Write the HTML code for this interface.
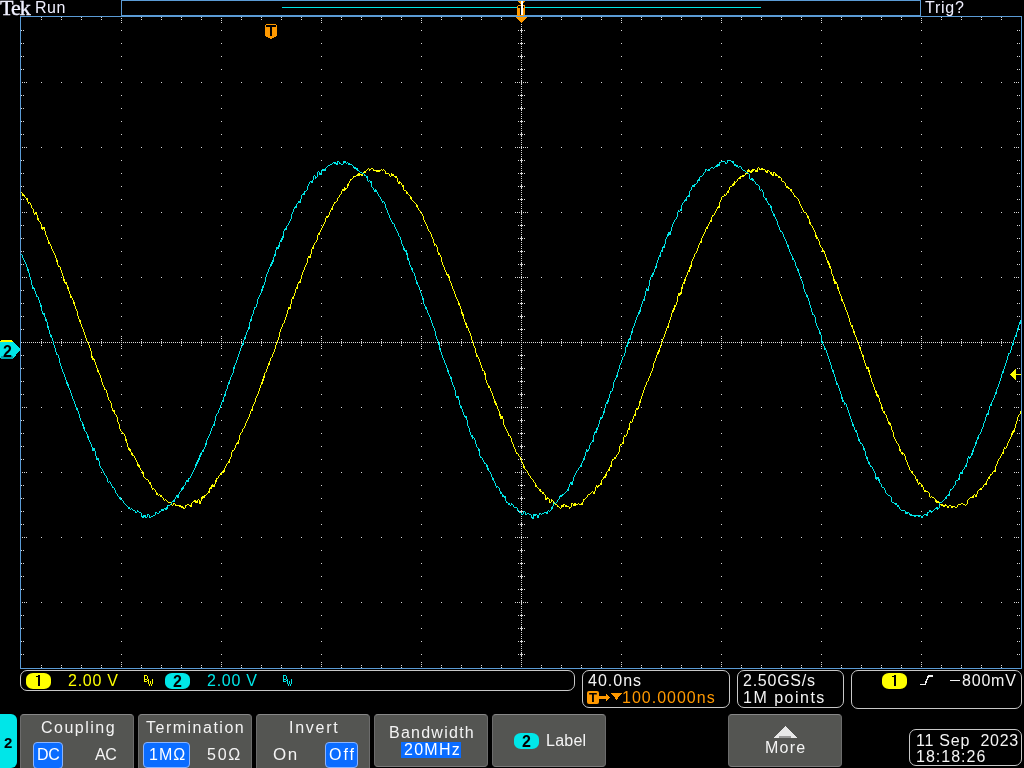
<!DOCTYPE html>
<html><head><meta charset="utf-8"><style>
html,body{margin:0;padding:0;background:#000;width:1024px;height:768px;overflow:hidden}
body{position:relative;font-family:"Liberation Sans",sans-serif;color:#eee}
.a{position:absolute;white-space:nowrap;line-height:1;will-change:transform}
</style></head><body>
<svg width="1024" height="768" viewBox="0 0 1024 768" shape-rendering="crispEdges" style="position:absolute;left:0;top:0">
<rect x="121.5" y="0.5" width="799" height="15" fill="none" stroke="#5b9bd5"/>
<rect x="282" y="7" width="479" height="1" fill="#00e6e8"/>
<rect x="20.5" y="16.5" width="1001" height="652" fill="none" stroke="#5b9bd5"/>
<path d="M121 30h1v1h-1zM121 43h1v1h-1zM121 56h1v1h-1zM121 69h1v1h-1zM121 95h1v1h-1zM121 108h1v1h-1zM121 121h1v1h-1zM121 134h1v1h-1zM121 160h1v1h-1zM121 173h1v1h-1zM121 186h1v1h-1zM121 199h1v1h-1zM121 225h1v1h-1zM121 238h1v1h-1zM121 251h1v1h-1zM121 264h1v1h-1zM121 290h1v1h-1zM121 303h1v1h-1zM121 316h1v1h-1zM121 329h1v1h-1zM121 355h1v1h-1zM121 368h1v1h-1zM121 381h1v1h-1zM121 394h1v1h-1zM121 420h1v1h-1zM121 433h1v1h-1zM121 446h1v1h-1zM121 459h1v1h-1zM121 485h1v1h-1zM121 498h1v1h-1zM121 511h1v1h-1zM121 524h1v1h-1zM121 550h1v1h-1zM121 563h1v1h-1zM121 576h1v1h-1zM121 589h1v1h-1zM121 615h1v1h-1zM121 628h1v1h-1zM121 641h1v1h-1zM121 654h1v1h-1zM221 30h1v1h-1zM221 43h1v1h-1zM221 56h1v1h-1zM221 69h1v1h-1zM221 95h1v1h-1zM221 108h1v1h-1zM221 121h1v1h-1zM221 134h1v1h-1zM221 160h1v1h-1zM221 173h1v1h-1zM221 186h1v1h-1zM221 199h1v1h-1zM221 225h1v1h-1zM221 238h1v1h-1zM221 251h1v1h-1zM221 264h1v1h-1zM221 290h1v1h-1zM221 303h1v1h-1zM221 316h1v1h-1zM221 329h1v1h-1zM221 355h1v1h-1zM221 368h1v1h-1zM221 381h1v1h-1zM221 394h1v1h-1zM221 420h1v1h-1zM221 433h1v1h-1zM221 446h1v1h-1zM221 459h1v1h-1zM221 485h1v1h-1zM221 498h1v1h-1zM221 511h1v1h-1zM221 524h1v1h-1zM221 550h1v1h-1zM221 563h1v1h-1zM221 576h1v1h-1zM221 589h1v1h-1zM221 615h1v1h-1zM221 628h1v1h-1zM221 641h1v1h-1zM221 654h1v1h-1zM321 30h1v1h-1zM321 43h1v1h-1zM321 56h1v1h-1zM321 69h1v1h-1zM321 95h1v1h-1zM321 108h1v1h-1zM321 121h1v1h-1zM321 134h1v1h-1zM321 160h1v1h-1zM321 173h1v1h-1zM321 186h1v1h-1zM321 199h1v1h-1zM321 225h1v1h-1zM321 238h1v1h-1zM321 251h1v1h-1zM321 264h1v1h-1zM321 290h1v1h-1zM321 303h1v1h-1zM321 316h1v1h-1zM321 329h1v1h-1zM321 355h1v1h-1zM321 368h1v1h-1zM321 381h1v1h-1zM321 394h1v1h-1zM321 420h1v1h-1zM321 433h1v1h-1zM321 446h1v1h-1zM321 459h1v1h-1zM321 485h1v1h-1zM321 498h1v1h-1zM321 511h1v1h-1zM321 524h1v1h-1zM321 550h1v1h-1zM321 563h1v1h-1zM321 576h1v1h-1zM321 589h1v1h-1zM321 615h1v1h-1zM321 628h1v1h-1zM321 641h1v1h-1zM321 654h1v1h-1zM421 30h1v1h-1zM421 43h1v1h-1zM421 56h1v1h-1zM421 69h1v1h-1zM421 95h1v1h-1zM421 108h1v1h-1zM421 121h1v1h-1zM421 134h1v1h-1zM421 160h1v1h-1zM421 173h1v1h-1zM421 186h1v1h-1zM421 199h1v1h-1zM421 225h1v1h-1zM421 238h1v1h-1zM421 251h1v1h-1zM421 264h1v1h-1zM421 290h1v1h-1zM421 303h1v1h-1zM421 316h1v1h-1zM421 329h1v1h-1zM421 355h1v1h-1zM421 368h1v1h-1zM421 381h1v1h-1zM421 394h1v1h-1zM421 420h1v1h-1zM421 433h1v1h-1zM421 446h1v1h-1zM421 459h1v1h-1zM421 485h1v1h-1zM421 498h1v1h-1zM421 511h1v1h-1zM421 524h1v1h-1zM421 550h1v1h-1zM421 563h1v1h-1zM421 576h1v1h-1zM421 589h1v1h-1zM421 615h1v1h-1zM421 628h1v1h-1zM421 641h1v1h-1zM421 654h1v1h-1zM621 30h1v1h-1zM621 43h1v1h-1zM621 56h1v1h-1zM621 69h1v1h-1zM621 95h1v1h-1zM621 108h1v1h-1zM621 121h1v1h-1zM621 134h1v1h-1zM621 160h1v1h-1zM621 173h1v1h-1zM621 186h1v1h-1zM621 199h1v1h-1zM621 225h1v1h-1zM621 238h1v1h-1zM621 251h1v1h-1zM621 264h1v1h-1zM621 290h1v1h-1zM621 303h1v1h-1zM621 316h1v1h-1zM621 329h1v1h-1zM621 355h1v1h-1zM621 368h1v1h-1zM621 381h1v1h-1zM621 394h1v1h-1zM621 420h1v1h-1zM621 433h1v1h-1zM621 446h1v1h-1zM621 459h1v1h-1zM621 485h1v1h-1zM621 498h1v1h-1zM621 511h1v1h-1zM621 524h1v1h-1zM621 550h1v1h-1zM621 563h1v1h-1zM621 576h1v1h-1zM621 589h1v1h-1zM621 615h1v1h-1zM621 628h1v1h-1zM621 641h1v1h-1zM621 654h1v1h-1zM721 30h1v1h-1zM721 43h1v1h-1zM721 56h1v1h-1zM721 69h1v1h-1zM721 95h1v1h-1zM721 108h1v1h-1zM721 121h1v1h-1zM721 134h1v1h-1zM721 160h1v1h-1zM721 173h1v1h-1zM721 186h1v1h-1zM721 199h1v1h-1zM721 225h1v1h-1zM721 238h1v1h-1zM721 251h1v1h-1zM721 264h1v1h-1zM721 290h1v1h-1zM721 303h1v1h-1zM721 316h1v1h-1zM721 329h1v1h-1zM721 355h1v1h-1zM721 368h1v1h-1zM721 381h1v1h-1zM721 394h1v1h-1zM721 420h1v1h-1zM721 433h1v1h-1zM721 446h1v1h-1zM721 459h1v1h-1zM721 485h1v1h-1zM721 498h1v1h-1zM721 511h1v1h-1zM721 524h1v1h-1zM721 550h1v1h-1zM721 563h1v1h-1zM721 576h1v1h-1zM721 589h1v1h-1zM721 615h1v1h-1zM721 628h1v1h-1zM721 641h1v1h-1zM721 654h1v1h-1zM821 30h1v1h-1zM821 43h1v1h-1zM821 56h1v1h-1zM821 69h1v1h-1zM821 95h1v1h-1zM821 108h1v1h-1zM821 121h1v1h-1zM821 134h1v1h-1zM821 160h1v1h-1zM821 173h1v1h-1zM821 186h1v1h-1zM821 199h1v1h-1zM821 225h1v1h-1zM821 238h1v1h-1zM821 251h1v1h-1zM821 264h1v1h-1zM821 290h1v1h-1zM821 303h1v1h-1zM821 316h1v1h-1zM821 329h1v1h-1zM821 355h1v1h-1zM821 368h1v1h-1zM821 381h1v1h-1zM821 394h1v1h-1zM821 420h1v1h-1zM821 433h1v1h-1zM821 446h1v1h-1zM821 459h1v1h-1zM821 485h1v1h-1zM821 498h1v1h-1zM821 511h1v1h-1zM821 524h1v1h-1zM821 550h1v1h-1zM821 563h1v1h-1zM821 576h1v1h-1zM821 589h1v1h-1zM821 615h1v1h-1zM821 628h1v1h-1zM821 641h1v1h-1zM821 654h1v1h-1zM921 30h1v1h-1zM921 43h1v1h-1zM921 56h1v1h-1zM921 69h1v1h-1zM921 95h1v1h-1zM921 108h1v1h-1zM921 121h1v1h-1zM921 134h1v1h-1zM921 160h1v1h-1zM921 173h1v1h-1zM921 186h1v1h-1zM921 199h1v1h-1zM921 225h1v1h-1zM921 238h1v1h-1zM921 251h1v1h-1zM921 264h1v1h-1zM921 290h1v1h-1zM921 303h1v1h-1zM921 316h1v1h-1zM921 329h1v1h-1zM921 355h1v1h-1zM921 368h1v1h-1zM921 381h1v1h-1zM921 394h1v1h-1zM921 420h1v1h-1zM921 433h1v1h-1zM921 446h1v1h-1zM921 459h1v1h-1zM921 485h1v1h-1zM921 498h1v1h-1zM921 511h1v1h-1zM921 524h1v1h-1zM921 550h1v1h-1zM921 563h1v1h-1zM921 576h1v1h-1zM921 589h1v1h-1zM921 615h1v1h-1zM921 628h1v1h-1zM921 641h1v1h-1zM921 654h1v1h-1zM41 82h1v1h-1zM61 82h1v1h-1zM81 82h1v1h-1zM101 82h1v1h-1zM121 82h1v1h-1zM141 82h1v1h-1zM161 82h1v1h-1zM181 82h1v1h-1zM201 82h1v1h-1zM221 82h1v1h-1zM241 82h1v1h-1zM261 82h1v1h-1zM281 82h1v1h-1zM301 82h1v1h-1zM321 82h1v1h-1zM341 82h1v1h-1zM361 82h1v1h-1zM381 82h1v1h-1zM401 82h1v1h-1zM421 82h1v1h-1zM441 82h1v1h-1zM461 82h1v1h-1zM481 82h1v1h-1zM501 82h1v1h-1zM521 82h1v1h-1zM541 82h1v1h-1zM561 82h1v1h-1zM581 82h1v1h-1zM601 82h1v1h-1zM621 82h1v1h-1zM641 82h1v1h-1zM661 82h1v1h-1zM681 82h1v1h-1zM701 82h1v1h-1zM721 82h1v1h-1zM741 82h1v1h-1zM761 82h1v1h-1zM781 82h1v1h-1zM801 82h1v1h-1zM821 82h1v1h-1zM841 82h1v1h-1zM861 82h1v1h-1zM881 82h1v1h-1zM901 82h1v1h-1zM921 82h1v1h-1zM941 82h1v1h-1zM961 82h1v1h-1zM981 82h1v1h-1zM1001 82h1v1h-1zM41 147h1v1h-1zM61 147h1v1h-1zM81 147h1v1h-1zM101 147h1v1h-1zM121 147h1v1h-1zM141 147h1v1h-1zM161 147h1v1h-1zM181 147h1v1h-1zM201 147h1v1h-1zM221 147h1v1h-1zM241 147h1v1h-1zM261 147h1v1h-1zM281 147h1v1h-1zM301 147h1v1h-1zM321 147h1v1h-1zM341 147h1v1h-1zM361 147h1v1h-1zM381 147h1v1h-1zM401 147h1v1h-1zM421 147h1v1h-1zM441 147h1v1h-1zM461 147h1v1h-1zM481 147h1v1h-1zM501 147h1v1h-1zM521 147h1v1h-1zM541 147h1v1h-1zM561 147h1v1h-1zM581 147h1v1h-1zM601 147h1v1h-1zM621 147h1v1h-1zM641 147h1v1h-1zM661 147h1v1h-1zM681 147h1v1h-1zM701 147h1v1h-1zM721 147h1v1h-1zM741 147h1v1h-1zM761 147h1v1h-1zM781 147h1v1h-1zM801 147h1v1h-1zM821 147h1v1h-1zM841 147h1v1h-1zM861 147h1v1h-1zM881 147h1v1h-1zM901 147h1v1h-1zM921 147h1v1h-1zM941 147h1v1h-1zM961 147h1v1h-1zM981 147h1v1h-1zM1001 147h1v1h-1zM41 212h1v1h-1zM61 212h1v1h-1zM81 212h1v1h-1zM101 212h1v1h-1zM121 212h1v1h-1zM141 212h1v1h-1zM161 212h1v1h-1zM181 212h1v1h-1zM201 212h1v1h-1zM221 212h1v1h-1zM241 212h1v1h-1zM261 212h1v1h-1zM281 212h1v1h-1zM301 212h1v1h-1zM321 212h1v1h-1zM341 212h1v1h-1zM361 212h1v1h-1zM381 212h1v1h-1zM401 212h1v1h-1zM421 212h1v1h-1zM441 212h1v1h-1zM461 212h1v1h-1zM481 212h1v1h-1zM501 212h1v1h-1zM521 212h1v1h-1zM541 212h1v1h-1zM561 212h1v1h-1zM581 212h1v1h-1zM601 212h1v1h-1zM621 212h1v1h-1zM641 212h1v1h-1zM661 212h1v1h-1zM681 212h1v1h-1zM701 212h1v1h-1zM721 212h1v1h-1zM741 212h1v1h-1zM761 212h1v1h-1zM781 212h1v1h-1zM801 212h1v1h-1zM821 212h1v1h-1zM841 212h1v1h-1zM861 212h1v1h-1zM881 212h1v1h-1zM901 212h1v1h-1zM921 212h1v1h-1zM941 212h1v1h-1zM961 212h1v1h-1zM981 212h1v1h-1zM1001 212h1v1h-1zM41 277h1v1h-1zM61 277h1v1h-1zM81 277h1v1h-1zM101 277h1v1h-1zM121 277h1v1h-1zM141 277h1v1h-1zM161 277h1v1h-1zM181 277h1v1h-1zM201 277h1v1h-1zM221 277h1v1h-1zM241 277h1v1h-1zM261 277h1v1h-1zM281 277h1v1h-1zM301 277h1v1h-1zM321 277h1v1h-1zM341 277h1v1h-1zM361 277h1v1h-1zM381 277h1v1h-1zM401 277h1v1h-1zM421 277h1v1h-1zM441 277h1v1h-1zM461 277h1v1h-1zM481 277h1v1h-1zM501 277h1v1h-1zM521 277h1v1h-1zM541 277h1v1h-1zM561 277h1v1h-1zM581 277h1v1h-1zM601 277h1v1h-1zM621 277h1v1h-1zM641 277h1v1h-1zM661 277h1v1h-1zM681 277h1v1h-1zM701 277h1v1h-1zM721 277h1v1h-1zM741 277h1v1h-1zM761 277h1v1h-1zM781 277h1v1h-1zM801 277h1v1h-1zM821 277h1v1h-1zM841 277h1v1h-1zM861 277h1v1h-1zM881 277h1v1h-1zM901 277h1v1h-1zM921 277h1v1h-1zM941 277h1v1h-1zM961 277h1v1h-1zM981 277h1v1h-1zM1001 277h1v1h-1zM41 407h1v1h-1zM61 407h1v1h-1zM81 407h1v1h-1zM101 407h1v1h-1zM121 407h1v1h-1zM141 407h1v1h-1zM161 407h1v1h-1zM181 407h1v1h-1zM201 407h1v1h-1zM221 407h1v1h-1zM241 407h1v1h-1zM261 407h1v1h-1zM281 407h1v1h-1zM301 407h1v1h-1zM321 407h1v1h-1zM341 407h1v1h-1zM361 407h1v1h-1zM381 407h1v1h-1zM401 407h1v1h-1zM421 407h1v1h-1zM441 407h1v1h-1zM461 407h1v1h-1zM481 407h1v1h-1zM501 407h1v1h-1zM521 407h1v1h-1zM541 407h1v1h-1zM561 407h1v1h-1zM581 407h1v1h-1zM601 407h1v1h-1zM621 407h1v1h-1zM641 407h1v1h-1zM661 407h1v1h-1zM681 407h1v1h-1zM701 407h1v1h-1zM721 407h1v1h-1zM741 407h1v1h-1zM761 407h1v1h-1zM781 407h1v1h-1zM801 407h1v1h-1zM821 407h1v1h-1zM841 407h1v1h-1zM861 407h1v1h-1zM881 407h1v1h-1zM901 407h1v1h-1zM921 407h1v1h-1zM941 407h1v1h-1zM961 407h1v1h-1zM981 407h1v1h-1zM1001 407h1v1h-1zM41 472h1v1h-1zM61 472h1v1h-1zM81 472h1v1h-1zM101 472h1v1h-1zM121 472h1v1h-1zM141 472h1v1h-1zM161 472h1v1h-1zM181 472h1v1h-1zM201 472h1v1h-1zM221 472h1v1h-1zM241 472h1v1h-1zM261 472h1v1h-1zM281 472h1v1h-1zM301 472h1v1h-1zM321 472h1v1h-1zM341 472h1v1h-1zM361 472h1v1h-1zM381 472h1v1h-1zM401 472h1v1h-1zM421 472h1v1h-1zM441 472h1v1h-1zM461 472h1v1h-1zM481 472h1v1h-1zM501 472h1v1h-1zM521 472h1v1h-1zM541 472h1v1h-1zM561 472h1v1h-1zM581 472h1v1h-1zM601 472h1v1h-1zM621 472h1v1h-1zM641 472h1v1h-1zM661 472h1v1h-1zM681 472h1v1h-1zM701 472h1v1h-1zM721 472h1v1h-1zM741 472h1v1h-1zM761 472h1v1h-1zM781 472h1v1h-1zM801 472h1v1h-1zM821 472h1v1h-1zM841 472h1v1h-1zM861 472h1v1h-1zM881 472h1v1h-1zM901 472h1v1h-1zM921 472h1v1h-1zM941 472h1v1h-1zM961 472h1v1h-1zM981 472h1v1h-1zM1001 472h1v1h-1zM41 537h1v1h-1zM61 537h1v1h-1zM81 537h1v1h-1zM101 537h1v1h-1zM121 537h1v1h-1zM141 537h1v1h-1zM161 537h1v1h-1zM181 537h1v1h-1zM201 537h1v1h-1zM221 537h1v1h-1zM241 537h1v1h-1zM261 537h1v1h-1zM281 537h1v1h-1zM301 537h1v1h-1zM321 537h1v1h-1zM341 537h1v1h-1zM361 537h1v1h-1zM381 537h1v1h-1zM401 537h1v1h-1zM421 537h1v1h-1zM441 537h1v1h-1zM461 537h1v1h-1zM481 537h1v1h-1zM501 537h1v1h-1zM521 537h1v1h-1zM541 537h1v1h-1zM561 537h1v1h-1zM581 537h1v1h-1zM601 537h1v1h-1zM621 537h1v1h-1zM641 537h1v1h-1zM661 537h1v1h-1zM681 537h1v1h-1zM701 537h1v1h-1zM721 537h1v1h-1zM741 537h1v1h-1zM761 537h1v1h-1zM781 537h1v1h-1zM801 537h1v1h-1zM821 537h1v1h-1zM841 537h1v1h-1zM861 537h1v1h-1zM881 537h1v1h-1zM901 537h1v1h-1zM921 537h1v1h-1zM941 537h1v1h-1zM961 537h1v1h-1zM981 537h1v1h-1zM1001 537h1v1h-1zM41 602h1v1h-1zM61 602h1v1h-1zM81 602h1v1h-1zM101 602h1v1h-1zM121 602h1v1h-1zM141 602h1v1h-1zM161 602h1v1h-1zM181 602h1v1h-1zM201 602h1v1h-1zM221 602h1v1h-1zM241 602h1v1h-1zM261 602h1v1h-1zM281 602h1v1h-1zM301 602h1v1h-1zM321 602h1v1h-1zM341 602h1v1h-1zM361 602h1v1h-1zM381 602h1v1h-1zM401 602h1v1h-1zM421 602h1v1h-1zM441 602h1v1h-1zM461 602h1v1h-1zM481 602h1v1h-1zM501 602h1v1h-1zM521 602h1v1h-1zM541 602h1v1h-1zM561 602h1v1h-1zM581 602h1v1h-1zM601 602h1v1h-1zM621 602h1v1h-1zM641 602h1v1h-1zM661 602h1v1h-1zM681 602h1v1h-1zM701 602h1v1h-1zM721 602h1v1h-1zM741 602h1v1h-1zM761 602h1v1h-1zM781 602h1v1h-1zM801 602h1v1h-1zM821 602h1v1h-1zM841 602h1v1h-1zM861 602h1v1h-1zM881 602h1v1h-1zM901 602h1v1h-1zM921 602h1v1h-1zM941 602h1v1h-1zM961 602h1v1h-1zM981 602h1v1h-1zM1001 602h1v1h-1zM521 18h1v1h-1zM521 20h1v1h-1zM521 22h1v1h-1zM521 24h1v1h-1zM521 26h1v1h-1zM521 28h1v1h-1zM521 30h1v1h-1zM521 32h1v1h-1zM521 34h1v1h-1zM521 36h1v1h-1zM521 38h1v1h-1zM521 40h1v1h-1zM521 42h1v1h-1zM521 44h1v1h-1zM521 46h1v1h-1zM521 48h1v1h-1zM521 50h1v1h-1zM521 52h1v1h-1zM521 54h1v1h-1zM521 56h1v1h-1zM521 58h1v1h-1zM521 60h1v1h-1zM521 62h1v1h-1zM521 64h1v1h-1zM521 66h1v1h-1zM521 68h1v1h-1zM521 70h1v1h-1zM521 72h1v1h-1zM521 74h1v1h-1zM521 76h1v1h-1zM521 78h1v1h-1zM521 80h1v1h-1zM521 82h1v1h-1zM521 84h1v1h-1zM521 86h1v1h-1zM521 88h1v1h-1zM521 90h1v1h-1zM521 92h1v1h-1zM521 94h1v1h-1zM521 96h1v1h-1zM521 98h1v1h-1zM521 100h1v1h-1zM521 102h1v1h-1zM521 104h1v1h-1zM521 106h1v1h-1zM521 108h1v1h-1zM521 110h1v1h-1zM521 112h1v1h-1zM521 114h1v1h-1zM521 116h1v1h-1zM521 118h1v1h-1zM521 120h1v1h-1zM521 122h1v1h-1zM521 124h1v1h-1zM521 126h1v1h-1zM521 128h1v1h-1zM521 130h1v1h-1zM521 132h1v1h-1zM521 134h1v1h-1zM521 136h1v1h-1zM521 138h1v1h-1zM521 140h1v1h-1zM521 142h1v1h-1zM521 144h1v1h-1zM521 146h1v1h-1zM521 148h1v1h-1zM521 150h1v1h-1zM521 152h1v1h-1zM521 154h1v1h-1zM521 156h1v1h-1zM521 158h1v1h-1zM521 160h1v1h-1zM521 162h1v1h-1zM521 164h1v1h-1zM521 166h1v1h-1zM521 168h1v1h-1zM521 170h1v1h-1zM521 172h1v1h-1zM521 174h1v1h-1zM521 176h1v1h-1zM521 178h1v1h-1zM521 180h1v1h-1zM521 182h1v1h-1zM521 184h1v1h-1zM521 186h1v1h-1zM521 188h1v1h-1zM521 190h1v1h-1zM521 192h1v1h-1zM521 194h1v1h-1zM521 196h1v1h-1zM521 198h1v1h-1zM521 200h1v1h-1zM521 202h1v1h-1zM521 204h1v1h-1zM521 206h1v1h-1zM521 208h1v1h-1zM521 210h1v1h-1zM521 212h1v1h-1zM521 214h1v1h-1zM521 216h1v1h-1zM521 218h1v1h-1zM521 220h1v1h-1zM521 222h1v1h-1zM521 224h1v1h-1zM521 226h1v1h-1zM521 228h1v1h-1zM521 230h1v1h-1zM521 232h1v1h-1zM521 234h1v1h-1zM521 236h1v1h-1zM521 238h1v1h-1zM521 240h1v1h-1zM521 242h1v1h-1zM521 244h1v1h-1zM521 246h1v1h-1zM521 248h1v1h-1zM521 250h1v1h-1zM521 252h1v1h-1zM521 254h1v1h-1zM521 256h1v1h-1zM521 258h1v1h-1zM521 260h1v1h-1zM521 262h1v1h-1zM521 264h1v1h-1zM521 266h1v1h-1zM521 268h1v1h-1zM521 270h1v1h-1zM521 272h1v1h-1zM521 274h1v1h-1zM521 276h1v1h-1zM521 278h1v1h-1zM521 280h1v1h-1zM521 282h1v1h-1zM521 284h1v1h-1zM521 286h1v1h-1zM521 288h1v1h-1zM521 290h1v1h-1zM521 292h1v1h-1zM521 294h1v1h-1zM521 296h1v1h-1zM521 298h1v1h-1zM521 300h1v1h-1zM521 302h1v1h-1zM521 304h1v1h-1zM521 306h1v1h-1zM521 308h1v1h-1zM521 310h1v1h-1zM521 312h1v1h-1zM521 314h1v1h-1zM521 316h1v1h-1zM521 318h1v1h-1zM521 320h1v1h-1zM521 322h1v1h-1zM521 324h1v1h-1zM521 326h1v1h-1zM521 328h1v1h-1zM521 330h1v1h-1zM521 332h1v1h-1zM521 334h1v1h-1zM521 336h1v1h-1zM521 338h1v1h-1zM521 340h1v1h-1zM521 342h1v1h-1zM521 344h1v1h-1zM521 346h1v1h-1zM521 348h1v1h-1zM521 350h1v1h-1zM521 352h1v1h-1zM521 354h1v1h-1zM521 356h1v1h-1zM521 358h1v1h-1zM521 360h1v1h-1zM521 362h1v1h-1zM521 364h1v1h-1zM521 366h1v1h-1zM521 368h1v1h-1zM521 370h1v1h-1zM521 372h1v1h-1zM521 374h1v1h-1zM521 376h1v1h-1zM521 378h1v1h-1zM521 380h1v1h-1zM521 382h1v1h-1zM521 384h1v1h-1zM521 386h1v1h-1zM521 388h1v1h-1zM521 390h1v1h-1zM521 392h1v1h-1zM521 394h1v1h-1zM521 396h1v1h-1zM521 398h1v1h-1zM521 400h1v1h-1zM521 402h1v1h-1zM521 404h1v1h-1zM521 406h1v1h-1zM521 408h1v1h-1zM521 410h1v1h-1zM521 412h1v1h-1zM521 414h1v1h-1zM521 416h1v1h-1zM521 418h1v1h-1zM521 420h1v1h-1zM521 422h1v1h-1zM521 424h1v1h-1zM521 426h1v1h-1zM521 428h1v1h-1zM521 430h1v1h-1zM521 432h1v1h-1zM521 434h1v1h-1zM521 436h1v1h-1zM521 438h1v1h-1zM521 440h1v1h-1zM521 442h1v1h-1zM521 444h1v1h-1zM521 446h1v1h-1zM521 448h1v1h-1zM521 450h1v1h-1zM521 452h1v1h-1zM521 454h1v1h-1zM521 456h1v1h-1zM521 458h1v1h-1zM521 460h1v1h-1zM521 462h1v1h-1zM521 464h1v1h-1zM521 466h1v1h-1zM521 468h1v1h-1zM521 470h1v1h-1zM521 472h1v1h-1zM521 474h1v1h-1zM521 476h1v1h-1zM521 478h1v1h-1zM521 480h1v1h-1zM521 482h1v1h-1zM521 484h1v1h-1zM521 486h1v1h-1zM521 488h1v1h-1zM521 490h1v1h-1zM521 492h1v1h-1zM521 494h1v1h-1zM521 496h1v1h-1zM521 498h1v1h-1zM521 500h1v1h-1zM521 502h1v1h-1zM521 504h1v1h-1zM521 506h1v1h-1zM521 508h1v1h-1zM521 510h1v1h-1zM521 512h1v1h-1zM521 514h1v1h-1zM521 516h1v1h-1zM521 518h1v1h-1zM521 520h1v1h-1zM521 522h1v1h-1zM521 524h1v1h-1zM521 526h1v1h-1zM521 528h1v1h-1zM521 530h1v1h-1zM521 532h1v1h-1zM521 534h1v1h-1zM521 536h1v1h-1zM521 538h1v1h-1zM521 540h1v1h-1zM521 542h1v1h-1zM521 544h1v1h-1zM521 546h1v1h-1zM521 548h1v1h-1zM521 550h1v1h-1zM521 552h1v1h-1zM521 554h1v1h-1zM521 556h1v1h-1zM521 558h1v1h-1zM521 560h1v1h-1zM521 562h1v1h-1zM521 564h1v1h-1zM521 566h1v1h-1zM521 568h1v1h-1zM521 570h1v1h-1zM521 572h1v1h-1zM521 574h1v1h-1zM521 576h1v1h-1zM521 578h1v1h-1zM521 580h1v1h-1zM521 582h1v1h-1zM521 584h1v1h-1zM521 586h1v1h-1zM521 588h1v1h-1zM521 590h1v1h-1zM521 592h1v1h-1zM521 594h1v1h-1zM521 596h1v1h-1zM521 598h1v1h-1zM521 600h1v1h-1zM521 602h1v1h-1zM521 604h1v1h-1zM521 606h1v1h-1zM521 608h1v1h-1zM521 610h1v1h-1zM521 612h1v1h-1zM521 614h1v1h-1zM521 616h1v1h-1zM521 618h1v1h-1zM521 620h1v1h-1zM521 622h1v1h-1zM521 624h1v1h-1zM521 626h1v1h-1zM521 628h1v1h-1zM521 630h1v1h-1zM521 632h1v1h-1zM521 634h1v1h-1zM521 636h1v1h-1zM521 638h1v1h-1zM521 640h1v1h-1zM521 642h1v1h-1zM521 644h1v1h-1zM521 646h1v1h-1zM521 648h1v1h-1zM521 650h1v1h-1zM521 652h1v1h-1zM521 654h1v1h-1zM521 656h1v1h-1zM521 658h1v1h-1zM521 660h1v1h-1zM521 662h1v1h-1zM521 664h1v1h-1zM521 666h1v1h-1zM518 30h1v1h-1zM524 30h1v1h-1zM520 30h3v1h-3zM521 29h1v3h-1zM518 43h1v1h-1zM524 43h1v1h-1zM520 43h3v1h-3zM521 42h1v3h-1zM518 56h1v1h-1zM524 56h1v1h-1zM520 56h3v1h-3zM521 55h1v3h-1zM518 69h1v1h-1zM524 69h1v1h-1zM520 69h3v1h-3zM521 68h1v3h-1zM515 82h1v1h-1zM517 82h1v1h-1zM519 82h1v1h-1zM523 82h1v1h-1zM525 82h1v1h-1zM527 82h1v1h-1zM521 81h1v3h-1zM518 95h1v1h-1zM524 95h1v1h-1zM520 95h3v1h-3zM521 94h1v3h-1zM518 108h1v1h-1zM524 108h1v1h-1zM520 108h3v1h-3zM521 107h1v3h-1zM518 121h1v1h-1zM524 121h1v1h-1zM520 121h3v1h-3zM521 120h1v3h-1zM518 134h1v1h-1zM524 134h1v1h-1zM520 134h3v1h-3zM521 133h1v3h-1zM515 147h1v1h-1zM517 147h1v1h-1zM519 147h1v1h-1zM523 147h1v1h-1zM525 147h1v1h-1zM527 147h1v1h-1zM521 146h1v3h-1zM518 160h1v1h-1zM524 160h1v1h-1zM520 160h3v1h-3zM521 159h1v3h-1zM518 173h1v1h-1zM524 173h1v1h-1zM520 173h3v1h-3zM521 172h1v3h-1zM518 186h1v1h-1zM524 186h1v1h-1zM520 186h3v1h-3zM521 185h1v3h-1zM518 199h1v1h-1zM524 199h1v1h-1zM520 199h3v1h-3zM521 198h1v3h-1zM515 212h1v1h-1zM517 212h1v1h-1zM519 212h1v1h-1zM523 212h1v1h-1zM525 212h1v1h-1zM527 212h1v1h-1zM521 211h1v3h-1zM518 225h1v1h-1zM524 225h1v1h-1zM520 225h3v1h-3zM521 224h1v3h-1zM518 238h1v1h-1zM524 238h1v1h-1zM520 238h3v1h-3zM521 237h1v3h-1zM518 251h1v1h-1zM524 251h1v1h-1zM520 251h3v1h-3zM521 250h1v3h-1zM518 264h1v1h-1zM524 264h1v1h-1zM520 264h3v1h-3zM521 263h1v3h-1zM515 277h1v1h-1zM517 277h1v1h-1zM519 277h1v1h-1zM523 277h1v1h-1zM525 277h1v1h-1zM527 277h1v1h-1zM521 276h1v3h-1zM518 290h1v1h-1zM524 290h1v1h-1zM520 290h3v1h-3zM521 289h1v3h-1zM518 303h1v1h-1zM524 303h1v1h-1zM520 303h3v1h-3zM521 302h1v3h-1zM518 316h1v1h-1zM524 316h1v1h-1zM520 316h3v1h-3zM521 315h1v3h-1zM518 329h1v1h-1zM524 329h1v1h-1zM520 329h3v1h-3zM521 328h1v3h-1zM518 355h1v1h-1zM524 355h1v1h-1zM520 355h3v1h-3zM521 354h1v3h-1zM518 368h1v1h-1zM524 368h1v1h-1zM520 368h3v1h-3zM521 367h1v3h-1zM518 381h1v1h-1zM524 381h1v1h-1zM520 381h3v1h-3zM521 380h1v3h-1zM518 394h1v1h-1zM524 394h1v1h-1zM520 394h3v1h-3zM521 393h1v3h-1zM515 407h1v1h-1zM517 407h1v1h-1zM519 407h1v1h-1zM523 407h1v1h-1zM525 407h1v1h-1zM527 407h1v1h-1zM521 406h1v3h-1zM518 420h1v1h-1zM524 420h1v1h-1zM520 420h3v1h-3zM521 419h1v3h-1zM518 433h1v1h-1zM524 433h1v1h-1zM520 433h3v1h-3zM521 432h1v3h-1zM518 446h1v1h-1zM524 446h1v1h-1zM520 446h3v1h-3zM521 445h1v3h-1zM518 459h1v1h-1zM524 459h1v1h-1zM520 459h3v1h-3zM521 458h1v3h-1zM515 472h1v1h-1zM517 472h1v1h-1zM519 472h1v1h-1zM523 472h1v1h-1zM525 472h1v1h-1zM527 472h1v1h-1zM521 471h1v3h-1zM518 485h1v1h-1zM524 485h1v1h-1zM520 485h3v1h-3zM521 484h1v3h-1zM518 498h1v1h-1zM524 498h1v1h-1zM520 498h3v1h-3zM521 497h1v3h-1zM518 511h1v1h-1zM524 511h1v1h-1zM520 511h3v1h-3zM521 510h1v3h-1zM518 524h1v1h-1zM524 524h1v1h-1zM520 524h3v1h-3zM521 523h1v3h-1zM515 537h1v1h-1zM517 537h1v1h-1zM519 537h1v1h-1zM523 537h1v1h-1zM525 537h1v1h-1zM527 537h1v1h-1zM521 536h1v3h-1zM518 550h1v1h-1zM524 550h1v1h-1zM520 550h3v1h-3zM521 549h1v3h-1zM518 563h1v1h-1zM524 563h1v1h-1zM520 563h3v1h-3zM521 562h1v3h-1zM518 576h1v1h-1zM524 576h1v1h-1zM520 576h3v1h-3zM521 575h1v3h-1zM518 589h1v1h-1zM524 589h1v1h-1zM520 589h3v1h-3zM521 588h1v3h-1zM515 602h1v1h-1zM517 602h1v1h-1zM519 602h1v1h-1zM523 602h1v1h-1zM525 602h1v1h-1zM527 602h1v1h-1zM521 601h1v3h-1zM518 615h1v1h-1zM524 615h1v1h-1zM520 615h3v1h-3zM521 614h1v3h-1zM518 628h1v1h-1zM524 628h1v1h-1zM520 628h3v1h-3zM521 627h1v3h-1zM518 641h1v1h-1zM524 641h1v1h-1zM520 641h3v1h-3zM521 640h1v3h-1zM518 654h1v1h-1zM524 654h1v1h-1zM520 654h3v1h-3zM521 653h1v3h-1zM21 342h1v1h-1zM23 342h1v1h-1zM25 342h1v1h-1zM27 342h1v1h-1zM29 342h1v1h-1zM31 342h1v1h-1zM33 342h1v1h-1zM35 342h1v1h-1zM37 342h1v1h-1zM39 342h1v1h-1zM41 342h1v1h-1zM43 342h1v1h-1zM45 342h1v1h-1zM47 342h1v1h-1zM49 342h1v1h-1zM51 342h1v1h-1zM53 342h1v1h-1zM55 342h1v1h-1zM57 342h1v1h-1zM59 342h1v1h-1zM61 342h1v1h-1zM63 342h1v1h-1zM65 342h1v1h-1zM67 342h1v1h-1zM69 342h1v1h-1zM71 342h1v1h-1zM73 342h1v1h-1zM75 342h1v1h-1zM77 342h1v1h-1zM79 342h1v1h-1zM81 342h1v1h-1zM83 342h1v1h-1zM85 342h1v1h-1zM87 342h1v1h-1zM89 342h1v1h-1zM91 342h1v1h-1zM93 342h1v1h-1zM95 342h1v1h-1zM97 342h1v1h-1zM99 342h1v1h-1zM101 342h1v1h-1zM103 342h1v1h-1zM105 342h1v1h-1zM107 342h1v1h-1zM109 342h1v1h-1zM111 342h1v1h-1zM113 342h1v1h-1zM115 342h1v1h-1zM117 342h1v1h-1zM119 342h1v1h-1zM121 342h1v1h-1zM123 342h1v1h-1zM125 342h1v1h-1zM127 342h1v1h-1zM129 342h1v1h-1zM131 342h1v1h-1zM133 342h1v1h-1zM135 342h1v1h-1zM137 342h1v1h-1zM139 342h1v1h-1zM141 342h1v1h-1zM143 342h1v1h-1zM145 342h1v1h-1zM147 342h1v1h-1zM149 342h1v1h-1zM151 342h1v1h-1zM153 342h1v1h-1zM155 342h1v1h-1zM157 342h1v1h-1zM159 342h1v1h-1zM161 342h1v1h-1zM163 342h1v1h-1zM165 342h1v1h-1zM167 342h1v1h-1zM169 342h1v1h-1zM171 342h1v1h-1zM173 342h1v1h-1zM175 342h1v1h-1zM177 342h1v1h-1zM179 342h1v1h-1zM181 342h1v1h-1zM183 342h1v1h-1zM185 342h1v1h-1zM187 342h1v1h-1zM189 342h1v1h-1zM191 342h1v1h-1zM193 342h1v1h-1zM195 342h1v1h-1zM197 342h1v1h-1zM199 342h1v1h-1zM201 342h1v1h-1zM203 342h1v1h-1zM205 342h1v1h-1zM207 342h1v1h-1zM209 342h1v1h-1zM211 342h1v1h-1zM213 342h1v1h-1zM215 342h1v1h-1zM217 342h1v1h-1zM219 342h1v1h-1zM221 342h1v1h-1zM223 342h1v1h-1zM225 342h1v1h-1zM227 342h1v1h-1zM229 342h1v1h-1zM231 342h1v1h-1zM233 342h1v1h-1zM235 342h1v1h-1zM237 342h1v1h-1zM239 342h1v1h-1zM241 342h1v1h-1zM243 342h1v1h-1zM245 342h1v1h-1zM247 342h1v1h-1zM249 342h1v1h-1zM251 342h1v1h-1zM253 342h1v1h-1zM255 342h1v1h-1zM257 342h1v1h-1zM259 342h1v1h-1zM261 342h1v1h-1zM263 342h1v1h-1zM265 342h1v1h-1zM267 342h1v1h-1zM269 342h1v1h-1zM271 342h1v1h-1zM273 342h1v1h-1zM275 342h1v1h-1zM277 342h1v1h-1zM279 342h1v1h-1zM281 342h1v1h-1zM283 342h1v1h-1zM285 342h1v1h-1zM287 342h1v1h-1zM289 342h1v1h-1zM291 342h1v1h-1zM293 342h1v1h-1zM295 342h1v1h-1zM297 342h1v1h-1zM299 342h1v1h-1zM301 342h1v1h-1zM303 342h1v1h-1zM305 342h1v1h-1zM307 342h1v1h-1zM309 342h1v1h-1zM311 342h1v1h-1zM313 342h1v1h-1zM315 342h1v1h-1zM317 342h1v1h-1zM319 342h1v1h-1zM321 342h1v1h-1zM323 342h1v1h-1zM325 342h1v1h-1zM327 342h1v1h-1zM329 342h1v1h-1zM331 342h1v1h-1zM333 342h1v1h-1zM335 342h1v1h-1zM337 342h1v1h-1zM339 342h1v1h-1zM341 342h1v1h-1zM343 342h1v1h-1zM345 342h1v1h-1zM347 342h1v1h-1zM349 342h1v1h-1zM351 342h1v1h-1zM353 342h1v1h-1zM355 342h1v1h-1zM357 342h1v1h-1zM359 342h1v1h-1zM361 342h1v1h-1zM363 342h1v1h-1zM365 342h1v1h-1zM367 342h1v1h-1zM369 342h1v1h-1zM371 342h1v1h-1zM373 342h1v1h-1zM375 342h1v1h-1zM377 342h1v1h-1zM379 342h1v1h-1zM381 342h1v1h-1zM383 342h1v1h-1zM385 342h1v1h-1zM387 342h1v1h-1zM389 342h1v1h-1zM391 342h1v1h-1zM393 342h1v1h-1zM395 342h1v1h-1zM397 342h1v1h-1zM399 342h1v1h-1zM401 342h1v1h-1zM403 342h1v1h-1zM405 342h1v1h-1zM407 342h1v1h-1zM409 342h1v1h-1zM411 342h1v1h-1zM413 342h1v1h-1zM415 342h1v1h-1zM417 342h1v1h-1zM419 342h1v1h-1zM421 342h1v1h-1zM423 342h1v1h-1zM425 342h1v1h-1zM427 342h1v1h-1zM429 342h1v1h-1zM431 342h1v1h-1zM433 342h1v1h-1zM435 342h1v1h-1zM437 342h1v1h-1zM439 342h1v1h-1zM441 342h1v1h-1zM443 342h1v1h-1zM445 342h1v1h-1zM447 342h1v1h-1zM449 342h1v1h-1zM451 342h1v1h-1zM453 342h1v1h-1zM455 342h1v1h-1zM457 342h1v1h-1zM459 342h1v1h-1zM461 342h1v1h-1zM463 342h1v1h-1zM465 342h1v1h-1zM467 342h1v1h-1zM469 342h1v1h-1zM471 342h1v1h-1zM473 342h1v1h-1zM475 342h1v1h-1zM477 342h1v1h-1zM479 342h1v1h-1zM481 342h1v1h-1zM483 342h1v1h-1zM485 342h1v1h-1zM487 342h1v1h-1zM489 342h1v1h-1zM491 342h1v1h-1zM493 342h1v1h-1zM495 342h1v1h-1zM497 342h1v1h-1zM499 342h1v1h-1zM501 342h1v1h-1zM503 342h1v1h-1zM505 342h1v1h-1zM507 342h1v1h-1zM509 342h1v1h-1zM511 342h1v1h-1zM513 342h1v1h-1zM515 342h1v1h-1zM517 342h1v1h-1zM519 342h1v1h-1zM521 342h1v1h-1zM523 342h1v1h-1zM525 342h1v1h-1zM527 342h1v1h-1zM529 342h1v1h-1zM531 342h1v1h-1zM533 342h1v1h-1zM535 342h1v1h-1zM537 342h1v1h-1zM539 342h1v1h-1zM541 342h1v1h-1zM543 342h1v1h-1zM545 342h1v1h-1zM547 342h1v1h-1zM549 342h1v1h-1zM551 342h1v1h-1zM553 342h1v1h-1zM555 342h1v1h-1zM557 342h1v1h-1zM559 342h1v1h-1zM561 342h1v1h-1zM563 342h1v1h-1zM565 342h1v1h-1zM567 342h1v1h-1zM569 342h1v1h-1zM571 342h1v1h-1zM573 342h1v1h-1zM575 342h1v1h-1zM577 342h1v1h-1zM579 342h1v1h-1zM581 342h1v1h-1zM583 342h1v1h-1zM585 342h1v1h-1zM587 342h1v1h-1zM589 342h1v1h-1zM591 342h1v1h-1zM593 342h1v1h-1zM595 342h1v1h-1zM597 342h1v1h-1zM599 342h1v1h-1zM601 342h1v1h-1zM603 342h1v1h-1zM605 342h1v1h-1zM607 342h1v1h-1zM609 342h1v1h-1zM611 342h1v1h-1zM613 342h1v1h-1zM615 342h1v1h-1zM617 342h1v1h-1zM619 342h1v1h-1zM621 342h1v1h-1zM623 342h1v1h-1zM625 342h1v1h-1zM627 342h1v1h-1zM629 342h1v1h-1zM631 342h1v1h-1zM633 342h1v1h-1zM635 342h1v1h-1zM637 342h1v1h-1zM639 342h1v1h-1zM641 342h1v1h-1zM643 342h1v1h-1zM645 342h1v1h-1zM647 342h1v1h-1zM649 342h1v1h-1zM651 342h1v1h-1zM653 342h1v1h-1zM655 342h1v1h-1zM657 342h1v1h-1zM659 342h1v1h-1zM661 342h1v1h-1zM663 342h1v1h-1zM665 342h1v1h-1zM667 342h1v1h-1zM669 342h1v1h-1zM671 342h1v1h-1zM673 342h1v1h-1zM675 342h1v1h-1zM677 342h1v1h-1zM679 342h1v1h-1zM681 342h1v1h-1zM683 342h1v1h-1zM685 342h1v1h-1zM687 342h1v1h-1zM689 342h1v1h-1zM691 342h1v1h-1zM693 342h1v1h-1zM695 342h1v1h-1zM697 342h1v1h-1zM699 342h1v1h-1zM701 342h1v1h-1zM703 342h1v1h-1zM705 342h1v1h-1zM707 342h1v1h-1zM709 342h1v1h-1zM711 342h1v1h-1zM713 342h1v1h-1zM715 342h1v1h-1zM717 342h1v1h-1zM719 342h1v1h-1zM721 342h1v1h-1zM723 342h1v1h-1zM725 342h1v1h-1zM727 342h1v1h-1zM729 342h1v1h-1zM731 342h1v1h-1zM733 342h1v1h-1zM735 342h1v1h-1zM737 342h1v1h-1zM739 342h1v1h-1zM741 342h1v1h-1zM743 342h1v1h-1zM745 342h1v1h-1zM747 342h1v1h-1zM749 342h1v1h-1zM751 342h1v1h-1zM753 342h1v1h-1zM755 342h1v1h-1zM757 342h1v1h-1zM759 342h1v1h-1zM761 342h1v1h-1zM763 342h1v1h-1zM765 342h1v1h-1zM767 342h1v1h-1zM769 342h1v1h-1zM771 342h1v1h-1zM773 342h1v1h-1zM775 342h1v1h-1zM777 342h1v1h-1zM779 342h1v1h-1zM781 342h1v1h-1zM783 342h1v1h-1zM785 342h1v1h-1zM787 342h1v1h-1zM789 342h1v1h-1zM791 342h1v1h-1zM793 342h1v1h-1zM795 342h1v1h-1zM797 342h1v1h-1zM799 342h1v1h-1zM801 342h1v1h-1zM803 342h1v1h-1zM805 342h1v1h-1zM807 342h1v1h-1zM809 342h1v1h-1zM811 342h1v1h-1zM813 342h1v1h-1zM815 342h1v1h-1zM817 342h1v1h-1zM819 342h1v1h-1zM821 342h1v1h-1zM823 342h1v1h-1zM825 342h1v1h-1zM827 342h1v1h-1zM829 342h1v1h-1zM831 342h1v1h-1zM833 342h1v1h-1zM835 342h1v1h-1zM837 342h1v1h-1zM839 342h1v1h-1zM841 342h1v1h-1zM843 342h1v1h-1zM845 342h1v1h-1zM847 342h1v1h-1zM849 342h1v1h-1zM851 342h1v1h-1zM853 342h1v1h-1zM855 342h1v1h-1zM857 342h1v1h-1zM859 342h1v1h-1zM861 342h1v1h-1zM863 342h1v1h-1zM865 342h1v1h-1zM867 342h1v1h-1zM869 342h1v1h-1zM871 342h1v1h-1zM873 342h1v1h-1zM875 342h1v1h-1zM877 342h1v1h-1zM879 342h1v1h-1zM881 342h1v1h-1zM883 342h1v1h-1zM885 342h1v1h-1zM887 342h1v1h-1zM889 342h1v1h-1zM891 342h1v1h-1zM893 342h1v1h-1zM895 342h1v1h-1zM897 342h1v1h-1zM899 342h1v1h-1zM901 342h1v1h-1zM903 342h1v1h-1zM905 342h1v1h-1zM907 342h1v1h-1zM909 342h1v1h-1zM911 342h1v1h-1zM913 342h1v1h-1zM915 342h1v1h-1zM917 342h1v1h-1zM919 342h1v1h-1zM921 342h1v1h-1zM923 342h1v1h-1zM925 342h1v1h-1zM927 342h1v1h-1zM929 342h1v1h-1zM931 342h1v1h-1zM933 342h1v1h-1zM935 342h1v1h-1zM937 342h1v1h-1zM939 342h1v1h-1zM941 342h1v1h-1zM943 342h1v1h-1zM945 342h1v1h-1zM947 342h1v1h-1zM949 342h1v1h-1zM951 342h1v1h-1zM953 342h1v1h-1zM955 342h1v1h-1zM957 342h1v1h-1zM959 342h1v1h-1zM961 342h1v1h-1zM963 342h1v1h-1zM965 342h1v1h-1zM967 342h1v1h-1zM969 342h1v1h-1zM971 342h1v1h-1zM973 342h1v1h-1zM975 342h1v1h-1zM977 342h1v1h-1zM979 342h1v1h-1zM981 342h1v1h-1zM983 342h1v1h-1zM985 342h1v1h-1zM987 342h1v1h-1zM989 342h1v1h-1zM991 342h1v1h-1zM993 342h1v1h-1zM995 342h1v1h-1zM997 342h1v1h-1zM999 342h1v1h-1zM1001 342h1v1h-1zM1003 342h1v1h-1zM1005 342h1v1h-1zM1007 342h1v1h-1zM1009 342h1v1h-1zM1011 342h1v1h-1zM1013 342h1v1h-1zM1015 342h1v1h-1zM1017 342h1v1h-1zM1019 342h1v1h-1zM41 339h1v1h-1zM41 345h1v1h-1zM41 341h1v3h-1zM61 339h1v1h-1zM61 345h1v1h-1zM61 341h1v3h-1zM81 339h1v1h-1zM81 345h1v1h-1zM81 341h1v3h-1zM101 339h1v1h-1zM101 345h1v1h-1zM101 341h1v3h-1zM121 336h1v1h-1zM121 338h1v1h-1zM121 340h1v1h-1zM121 344h1v1h-1zM121 346h1v1h-1zM121 348h1v1h-1zM141 339h1v1h-1zM141 345h1v1h-1zM141 341h1v3h-1zM161 339h1v1h-1zM161 345h1v1h-1zM161 341h1v3h-1zM181 339h1v1h-1zM181 345h1v1h-1zM181 341h1v3h-1zM201 339h1v1h-1zM201 345h1v1h-1zM201 341h1v3h-1zM221 336h1v1h-1zM221 338h1v1h-1zM221 340h1v1h-1zM221 344h1v1h-1zM221 346h1v1h-1zM221 348h1v1h-1zM241 339h1v1h-1zM241 345h1v1h-1zM241 341h1v3h-1zM261 339h1v1h-1zM261 345h1v1h-1zM261 341h1v3h-1zM281 339h1v1h-1zM281 345h1v1h-1zM281 341h1v3h-1zM301 339h1v1h-1zM301 345h1v1h-1zM301 341h1v3h-1zM321 336h1v1h-1zM321 338h1v1h-1zM321 340h1v1h-1zM321 344h1v1h-1zM321 346h1v1h-1zM321 348h1v1h-1zM341 339h1v1h-1zM341 345h1v1h-1zM341 341h1v3h-1zM361 339h1v1h-1zM361 345h1v1h-1zM361 341h1v3h-1zM381 339h1v1h-1zM381 345h1v1h-1zM381 341h1v3h-1zM401 339h1v1h-1zM401 345h1v1h-1zM401 341h1v3h-1zM421 336h1v1h-1zM421 338h1v1h-1zM421 340h1v1h-1zM421 344h1v1h-1zM421 346h1v1h-1zM421 348h1v1h-1zM441 339h1v1h-1zM441 345h1v1h-1zM441 341h1v3h-1zM461 339h1v1h-1zM461 345h1v1h-1zM461 341h1v3h-1zM481 339h1v1h-1zM481 345h1v1h-1zM481 341h1v3h-1zM501 339h1v1h-1zM501 345h1v1h-1zM501 341h1v3h-1zM541 339h1v1h-1zM541 345h1v1h-1zM541 341h1v3h-1zM561 339h1v1h-1zM561 345h1v1h-1zM561 341h1v3h-1zM581 339h1v1h-1zM581 345h1v1h-1zM581 341h1v3h-1zM601 339h1v1h-1zM601 345h1v1h-1zM601 341h1v3h-1zM621 336h1v1h-1zM621 338h1v1h-1zM621 340h1v1h-1zM621 344h1v1h-1zM621 346h1v1h-1zM621 348h1v1h-1zM641 339h1v1h-1zM641 345h1v1h-1zM641 341h1v3h-1zM661 339h1v1h-1zM661 345h1v1h-1zM661 341h1v3h-1zM681 339h1v1h-1zM681 345h1v1h-1zM681 341h1v3h-1zM701 339h1v1h-1zM701 345h1v1h-1zM701 341h1v3h-1zM721 336h1v1h-1zM721 338h1v1h-1zM721 340h1v1h-1zM721 344h1v1h-1zM721 346h1v1h-1zM721 348h1v1h-1zM741 339h1v1h-1zM741 345h1v1h-1zM741 341h1v3h-1zM761 339h1v1h-1zM761 345h1v1h-1zM761 341h1v3h-1zM781 339h1v1h-1zM781 345h1v1h-1zM781 341h1v3h-1zM801 339h1v1h-1zM801 345h1v1h-1zM801 341h1v3h-1zM821 336h1v1h-1zM821 338h1v1h-1zM821 340h1v1h-1zM821 344h1v1h-1zM821 346h1v1h-1zM821 348h1v1h-1zM841 339h1v1h-1zM841 345h1v1h-1zM841 341h1v3h-1zM861 339h1v1h-1zM861 345h1v1h-1zM861 341h1v3h-1zM881 339h1v1h-1zM881 345h1v1h-1zM881 341h1v3h-1zM901 339h1v1h-1zM901 345h1v1h-1zM901 341h1v3h-1zM921 336h1v1h-1zM921 338h1v1h-1zM921 340h1v1h-1zM921 344h1v1h-1zM921 346h1v1h-1zM921 348h1v1h-1zM941 339h1v1h-1zM941 345h1v1h-1zM941 341h1v3h-1zM961 339h1v1h-1zM961 345h1v1h-1zM961 341h1v3h-1zM981 339h1v1h-1zM981 345h1v1h-1zM981 341h1v3h-1zM1001 339h1v1h-1zM1001 345h1v1h-1zM1001 341h1v3h-1zM41 17h1v1h-1zM41 19h1v1h-1zM41 665h1v1h-1zM41 667h1v1h-1zM61 17h1v1h-1zM61 19h1v1h-1zM61 665h1v1h-1zM61 667h1v1h-1zM81 17h1v1h-1zM81 19h1v1h-1zM81 665h1v1h-1zM81 667h1v1h-1zM101 17h1v1h-1zM101 19h1v1h-1zM101 665h1v1h-1zM101 667h1v1h-1zM121 18h1v1h-1zM121 20h1v1h-1zM121 22h1v1h-1zM121 662h1v1h-1zM121 664h1v1h-1zM121 666h1v1h-1zM141 17h1v1h-1zM141 19h1v1h-1zM141 665h1v1h-1zM141 667h1v1h-1zM161 17h1v1h-1zM161 19h1v1h-1zM161 665h1v1h-1zM161 667h1v1h-1zM181 17h1v1h-1zM181 19h1v1h-1zM181 665h1v1h-1zM181 667h1v1h-1zM201 17h1v1h-1zM201 19h1v1h-1zM201 665h1v1h-1zM201 667h1v1h-1zM221 18h1v1h-1zM221 20h1v1h-1zM221 22h1v1h-1zM221 662h1v1h-1zM221 664h1v1h-1zM221 666h1v1h-1zM241 17h1v1h-1zM241 19h1v1h-1zM241 665h1v1h-1zM241 667h1v1h-1zM261 17h1v1h-1zM261 19h1v1h-1zM261 665h1v1h-1zM261 667h1v1h-1zM281 17h1v1h-1zM281 19h1v1h-1zM281 665h1v1h-1zM281 667h1v1h-1zM301 17h1v1h-1zM301 19h1v1h-1zM301 665h1v1h-1zM301 667h1v1h-1zM321 18h1v1h-1zM321 20h1v1h-1zM321 22h1v1h-1zM321 662h1v1h-1zM321 664h1v1h-1zM321 666h1v1h-1zM341 17h1v1h-1zM341 19h1v1h-1zM341 665h1v1h-1zM341 667h1v1h-1zM361 17h1v1h-1zM361 19h1v1h-1zM361 665h1v1h-1zM361 667h1v1h-1zM381 17h1v1h-1zM381 19h1v1h-1zM381 665h1v1h-1zM381 667h1v1h-1zM401 17h1v1h-1zM401 19h1v1h-1zM401 665h1v1h-1zM401 667h1v1h-1zM421 18h1v1h-1zM421 20h1v1h-1zM421 22h1v1h-1zM421 662h1v1h-1zM421 664h1v1h-1zM421 666h1v1h-1zM441 17h1v1h-1zM441 19h1v1h-1zM441 665h1v1h-1zM441 667h1v1h-1zM461 17h1v1h-1zM461 19h1v1h-1zM461 665h1v1h-1zM461 667h1v1h-1zM481 17h1v1h-1zM481 19h1v1h-1zM481 665h1v1h-1zM481 667h1v1h-1zM501 17h1v1h-1zM501 19h1v1h-1zM501 665h1v1h-1zM501 667h1v1h-1zM541 17h1v1h-1zM541 19h1v1h-1zM541 665h1v1h-1zM541 667h1v1h-1zM561 17h1v1h-1zM561 19h1v1h-1zM561 665h1v1h-1zM561 667h1v1h-1zM581 17h1v1h-1zM581 19h1v1h-1zM581 665h1v1h-1zM581 667h1v1h-1zM601 17h1v1h-1zM601 19h1v1h-1zM601 665h1v1h-1zM601 667h1v1h-1zM621 18h1v1h-1zM621 20h1v1h-1zM621 22h1v1h-1zM621 662h1v1h-1zM621 664h1v1h-1zM621 666h1v1h-1zM641 17h1v1h-1zM641 19h1v1h-1zM641 665h1v1h-1zM641 667h1v1h-1zM661 17h1v1h-1zM661 19h1v1h-1zM661 665h1v1h-1zM661 667h1v1h-1zM681 17h1v1h-1zM681 19h1v1h-1zM681 665h1v1h-1zM681 667h1v1h-1zM701 17h1v1h-1zM701 19h1v1h-1zM701 665h1v1h-1zM701 667h1v1h-1zM721 18h1v1h-1zM721 20h1v1h-1zM721 22h1v1h-1zM721 662h1v1h-1zM721 664h1v1h-1zM721 666h1v1h-1zM741 17h1v1h-1zM741 19h1v1h-1zM741 665h1v1h-1zM741 667h1v1h-1zM761 17h1v1h-1zM761 19h1v1h-1zM761 665h1v1h-1zM761 667h1v1h-1zM781 17h1v1h-1zM781 19h1v1h-1zM781 665h1v1h-1zM781 667h1v1h-1zM801 17h1v1h-1zM801 19h1v1h-1zM801 665h1v1h-1zM801 667h1v1h-1zM821 18h1v1h-1zM821 20h1v1h-1zM821 22h1v1h-1zM821 662h1v1h-1zM821 664h1v1h-1zM821 666h1v1h-1zM841 17h1v1h-1zM841 19h1v1h-1zM841 665h1v1h-1zM841 667h1v1h-1zM861 17h1v1h-1zM861 19h1v1h-1zM861 665h1v1h-1zM861 667h1v1h-1zM881 17h1v1h-1zM881 19h1v1h-1zM881 665h1v1h-1zM881 667h1v1h-1zM901 17h1v1h-1zM901 19h1v1h-1zM901 665h1v1h-1zM901 667h1v1h-1zM921 18h1v1h-1zM921 20h1v1h-1zM921 22h1v1h-1zM921 662h1v1h-1zM921 664h1v1h-1zM921 666h1v1h-1zM941 17h1v1h-1zM941 19h1v1h-1zM941 665h1v1h-1zM941 667h1v1h-1zM961 17h1v1h-1zM961 19h1v1h-1zM961 665h1v1h-1zM961 667h1v1h-1zM981 17h1v1h-1zM981 19h1v1h-1zM981 665h1v1h-1zM981 667h1v1h-1zM1001 17h1v1h-1zM1001 19h1v1h-1zM1001 665h1v1h-1zM1001 667h1v1h-1zM21 30h1v1h-1zM23 30h1v1h-1zM1017 30h1v1h-1zM1019 30h1v1h-1zM21 43h1v1h-1zM23 43h1v1h-1zM1017 43h1v1h-1zM1019 43h1v1h-1zM21 56h1v1h-1zM23 56h1v1h-1zM1017 56h1v1h-1zM1019 56h1v1h-1zM21 69h1v1h-1zM23 69h1v1h-1zM1017 69h1v1h-1zM1019 69h1v1h-1zM22 82h1v1h-1zM24 82h1v1h-1zM26 82h1v1h-1zM1014 82h1v1h-1zM1016 82h1v1h-1zM1018 82h1v1h-1zM21 95h1v1h-1zM23 95h1v1h-1zM1017 95h1v1h-1zM1019 95h1v1h-1zM21 108h1v1h-1zM23 108h1v1h-1zM1017 108h1v1h-1zM1019 108h1v1h-1zM21 121h1v1h-1zM23 121h1v1h-1zM1017 121h1v1h-1zM1019 121h1v1h-1zM21 134h1v1h-1zM23 134h1v1h-1zM1017 134h1v1h-1zM1019 134h1v1h-1zM22 147h1v1h-1zM24 147h1v1h-1zM26 147h1v1h-1zM1014 147h1v1h-1zM1016 147h1v1h-1zM1018 147h1v1h-1zM21 160h1v1h-1zM23 160h1v1h-1zM1017 160h1v1h-1zM1019 160h1v1h-1zM21 173h1v1h-1zM23 173h1v1h-1zM1017 173h1v1h-1zM1019 173h1v1h-1zM21 186h1v1h-1zM23 186h1v1h-1zM1017 186h1v1h-1zM1019 186h1v1h-1zM21 199h1v1h-1zM23 199h1v1h-1zM1017 199h1v1h-1zM1019 199h1v1h-1zM22 212h1v1h-1zM24 212h1v1h-1zM26 212h1v1h-1zM1014 212h1v1h-1zM1016 212h1v1h-1zM1018 212h1v1h-1zM21 225h1v1h-1zM23 225h1v1h-1zM1017 225h1v1h-1zM1019 225h1v1h-1zM21 238h1v1h-1zM23 238h1v1h-1zM1017 238h1v1h-1zM1019 238h1v1h-1zM21 251h1v1h-1zM23 251h1v1h-1zM1017 251h1v1h-1zM1019 251h1v1h-1zM21 264h1v1h-1zM23 264h1v1h-1zM1017 264h1v1h-1zM1019 264h1v1h-1zM22 277h1v1h-1zM24 277h1v1h-1zM26 277h1v1h-1zM1014 277h1v1h-1zM1016 277h1v1h-1zM1018 277h1v1h-1zM21 290h1v1h-1zM23 290h1v1h-1zM1017 290h1v1h-1zM1019 290h1v1h-1zM21 303h1v1h-1zM23 303h1v1h-1zM1017 303h1v1h-1zM1019 303h1v1h-1zM21 316h1v1h-1zM23 316h1v1h-1zM1017 316h1v1h-1zM1019 316h1v1h-1zM21 329h1v1h-1zM23 329h1v1h-1zM1017 329h1v1h-1zM1019 329h1v1h-1zM21 355h1v1h-1zM23 355h1v1h-1zM1017 355h1v1h-1zM1019 355h1v1h-1zM21 368h1v1h-1zM23 368h1v1h-1zM1017 368h1v1h-1zM1019 368h1v1h-1zM21 381h1v1h-1zM23 381h1v1h-1zM1017 381h1v1h-1zM1019 381h1v1h-1zM21 394h1v1h-1zM23 394h1v1h-1zM1017 394h1v1h-1zM1019 394h1v1h-1zM22 407h1v1h-1zM24 407h1v1h-1zM26 407h1v1h-1zM1014 407h1v1h-1zM1016 407h1v1h-1zM1018 407h1v1h-1zM21 420h1v1h-1zM23 420h1v1h-1zM1017 420h1v1h-1zM1019 420h1v1h-1zM21 433h1v1h-1zM23 433h1v1h-1zM1017 433h1v1h-1zM1019 433h1v1h-1zM21 446h1v1h-1zM23 446h1v1h-1zM1017 446h1v1h-1zM1019 446h1v1h-1zM21 459h1v1h-1zM23 459h1v1h-1zM1017 459h1v1h-1zM1019 459h1v1h-1zM22 472h1v1h-1zM24 472h1v1h-1zM26 472h1v1h-1zM1014 472h1v1h-1zM1016 472h1v1h-1zM1018 472h1v1h-1zM21 485h1v1h-1zM23 485h1v1h-1zM1017 485h1v1h-1zM1019 485h1v1h-1zM21 498h1v1h-1zM23 498h1v1h-1zM1017 498h1v1h-1zM1019 498h1v1h-1zM21 511h1v1h-1zM23 511h1v1h-1zM1017 511h1v1h-1zM1019 511h1v1h-1zM21 524h1v1h-1zM23 524h1v1h-1zM1017 524h1v1h-1zM1019 524h1v1h-1zM22 537h1v1h-1zM24 537h1v1h-1zM26 537h1v1h-1zM1014 537h1v1h-1zM1016 537h1v1h-1zM1018 537h1v1h-1zM21 550h1v1h-1zM23 550h1v1h-1zM1017 550h1v1h-1zM1019 550h1v1h-1zM21 563h1v1h-1zM23 563h1v1h-1zM1017 563h1v1h-1zM1019 563h1v1h-1zM21 576h1v1h-1zM23 576h1v1h-1zM1017 576h1v1h-1zM1019 576h1v1h-1zM21 589h1v1h-1zM23 589h1v1h-1zM1017 589h1v1h-1zM1019 589h1v1h-1zM22 602h1v1h-1zM24 602h1v1h-1zM26 602h1v1h-1zM1014 602h1v1h-1zM1016 602h1v1h-1zM1018 602h1v1h-1zM21 615h1v1h-1zM23 615h1v1h-1zM1017 615h1v1h-1zM1019 615h1v1h-1zM21 628h1v1h-1zM23 628h1v1h-1zM1017 628h1v1h-1zM1019 628h1v1h-1zM21 641h1v1h-1zM23 641h1v1h-1zM1017 641h1v1h-1zM1019 641h1v1h-1zM21 654h1v1h-1zM23 654h1v1h-1zM1017 654h1v1h-1zM1019 654h1v1h-1z" fill="#d8d8d8"/>
<path d="M21 192h1v1h-1zM22 193h1v2h-1zM22 194h2v2h-2zM23 194h1v1h-1zM24 195h1v2h-1zM25 197h1v1h-1zM26 198h1v1h-1zM26 198h2v2h-2zM27 199h1v3h-1zM28 202h1v2h-1zM29 202h1v1h-1zM30 203h1v2h-1zM31 205h1v3h-1zM32 208h1v1h-1zM33 209h1v4h-1zM34 213h1v2h-1zM35 212h1v2h-1zM35 212h2v2h-2zM36 213h1v2h-1zM37 215h1v4h-1zM37 218h2v2h-2zM38 219h1v2h-1zM39 221h1v1h-1zM40 222h1v2h-1zM41 224h1v4h-1zM41 227h2v2h-2zM42 228h1v2h-1zM43 227h1v2h-1zM43 227h2v2h-2zM44 228h1v3h-1zM45 231h1v4h-1zM46 235h1v2h-1zM47 237h1v3h-1zM48 240h1v3h-1zM48 242h2v2h-2zM49 243h1v1h-1zM50 244h1v2h-1zM51 246h1v3h-1zM52 249h1v2h-1zM53 251h1v2h-1zM54 253h1v2h-1zM55 255h1v3h-1zM56 258h1v3h-1zM56 260h2v2h-2zM57 261h1v4h-1zM58 265h1v2h-1zM59 266h1v1h-1zM60 267h1v3h-1zM61 270h1v3h-1zM62 273h1v3h-1zM63 276h1v4h-1zM63 279h2v2h-2zM64 280h1v3h-1zM65 282h1v1h-1zM65 282h2v2h-2zM66 283h1v2h-1zM67 285h1v3h-1zM67 287h2v2h-2zM68 288h1v3h-1zM69 291h1v3h-1zM70 294h1v3h-1zM70 296h2v2h-2zM71 297h1v1h-1zM72 298h1v2h-1zM73 300h1v3h-1zM73 302h2v2h-2zM74 303h1v3h-1zM75 306h1v3h-1zM76 309h1v2h-1zM77 311h1v5h-1zM78 316h1v3h-1zM79 319h1v2h-1zM79 320h2v2h-2zM80 321h1v3h-1zM81 324h1v3h-1zM82 327h1v2h-1zM83 329h1v3h-1zM84 332h1v3h-1zM85 335h1v3h-1zM86 338h1v3h-1zM87 341h1v1h-1zM88 342h1v3h-1zM89 345h1v3h-1zM90 348h1v3h-1zM91 351h1v6h-1zM91 356h2v2h-2zM92 357h1v2h-1zM92 358h2v2h-2zM93 358h1v1h-1zM94 359h1v3h-1zM95 362h1v3h-1zM96 365h1v3h-1zM97 368h1v3h-1zM97 370h2v2h-2zM98 371h1v2h-1zM99 373h1v2h-1zM100 375h1v3h-1zM101 378h1v4h-1zM102 382h1v3h-1zM103 385h1v2h-1zM104 387h1v3h-1zM105 389h1v1h-1zM106 390h1v3h-1zM107 393h1v4h-1zM108 397h1v3h-1zM109 400h1v1h-1zM110 401h1v2h-1zM111 403h1v5h-1zM112 408h1v3h-1zM113 410h1v1h-1zM113 410h2v2h-2zM114 411h1v3h-1zM115 414h1v1h-1zM116 415h1v2h-1zM117 417h1v5h-1zM118 422h1v2h-1zM119 424h1v5h-1zM120 429h1v2h-1zM121 431h1v1h-1zM122 432h1v2h-1zM123 433h1v1h-1zM124 434h1v2h-1zM125 436h1v4h-1zM125 439h2v2h-2zM126 440h1v3h-1zM127 443h1v4h-1zM128 447h1v2h-1zM128 448h2v2h-2zM129 449h1v1h-1zM129 449h2v2h-2zM130 450h1v2h-1zM131 452h1v2h-1zM131 453h2v2h-2zM132 454h1v2h-1zM133 455h1v1h-1zM134 456h1v2h-1zM135 458h1v2h-1zM136 460h1v2h-1zM137 462h1v3h-1zM137 464h2v2h-2zM138 465h1v1h-1zM138 465h2v2h-2zM139 466h1v2h-1zM140 468h1v2h-1zM141 470h1v1h-1zM142 471h1v2h-1zM142 472h2v2h-2zM143 473h1v4h-1zM144 477h1v1h-1zM145 478h1v1h-1zM146 479h1v1h-1zM147 479h1v1h-1zM148 480h1v2h-1zM149 482h1v1h-1zM149 482h2v2h-2zM150 483h1v2h-1zM151 485h1v3h-1zM152 488h1v2h-1zM153 488h1v1h-1zM154 489h1v1h-1zM155 490h1v2h-1zM156 492h1v2h-1zM156 493h2v2h-2zM157 494h1v1h-1zM158 495h1v1h-1zM159 494h1v1h-1zM160 495h1v1h-1zM160 495h2v2h-2zM161 496h1v1h-1zM162 497h1v1h-1zM163 498h1v2h-1zM164 500h1v1h-1zM165 499h1v1h-1zM166 500h1v1h-1zM167 501h1v1h-1zM168 502h1v1h-1zM169 502h1v1h-1zM170 502h1v1h-1zM171 503h1v2h-1zM172 505h1v1h-1zM173 503h1v2h-1zM174 503h1v1h-1zM175 504h1v2h-1zM176 505h1v1h-1zM177 505h1v1h-1zM178 505h1v1h-1zM179 505h1v1h-1zM179 505h2v2h-2zM180 505h1v1h-1zM181 506h1v1h-1zM181 506h2v2h-2zM182 506h1v1h-1zM183 507h1v2h-1zM184 508h1v1h-1zM185 505h1v3h-1zM186 505h1v1h-1zM187 504h1v1h-1zM188 504h1v1h-1zM189 505h1v1h-1zM190 505h1v1h-1zM190 505h2v2h-2zM191 503h1v2h-1zM192 502h1v1h-1zM193 501h1v1h-1zM194 500h1v1h-1zM194 500h2v2h-2zM195 501h1v2h-1zM196 501h1v1h-1zM196 501h2v2h-2zM197 500h1v1h-1zM198 499h1v1h-1zM199 500h1v3h-1zM199 502h2v2h-2zM200 501h1v1h-1zM201 497h1v4h-1zM201 497h2v2h-2zM202 496h1v1h-1zM203 496h1v1h-1zM203 496h2v2h-2zM204 495h1v1h-1zM205 495h1v1h-1zM206 494h1v1h-1zM207 493h1v1h-1zM208 491h1v2h-1zM208 491h2v2h-2zM209 488h1v3h-1zM210 487h1v1h-1zM210 487h2v2h-2zM211 485h1v2h-1zM211 485h2v2h-2zM212 484h1v1h-1zM213 485h1v1h-1zM213 485h2v2h-2zM214 484h1v1h-1zM215 480h1v4h-1zM215 480h2v2h-2zM216 478h1v2h-1zM217 478h1v1h-1zM218 476h1v2h-1zM219 475h1v1h-1zM220 473h1v2h-1zM220 473h2v2h-2zM221 473h1v1h-1zM222 471h1v2h-1zM222 471h2v2h-2zM223 470h1v1h-1zM223 470h2v2h-2zM224 468h1v2h-1zM225 466h1v2h-1zM226 464h1v2h-1zM227 463h1v1h-1zM228 461h1v2h-1zM228 461h2v2h-2zM229 459h1v2h-1zM230 457h1v2h-1zM231 452h1v5h-1zM232 450h1v2h-1zM233 450h1v1h-1zM234 448h1v2h-1zM235 445h1v3h-1zM236 443h1v2h-1zM237 442h1v1h-1zM237 442h2v2h-2zM238 440h1v2h-1zM239 435h1v5h-1zM240 433h1v2h-1zM241 432h1v1h-1zM242 429h1v3h-1zM243 428h1v1h-1zM244 426h1v2h-1zM245 423h1v3h-1zM246 421h1v2h-1zM247 419h1v2h-1zM248 417h1v2h-1zM249 414h1v3h-1zM250 411h1v3h-1zM251 409h1v2h-1zM251 409h2v2h-2zM252 406h1v3h-1zM253 404h1v2h-1zM254 402h1v2h-1zM255 398h1v4h-1zM256 396h1v2h-1zM257 394h1v2h-1zM258 391h1v3h-1zM259 388h1v3h-1zM260 385h1v3h-1zM261 382h1v3h-1zM261 382h2v2h-2zM262 379h1v3h-1zM262 379h2v2h-2zM263 376h1v3h-1zM263 376h2v2h-2zM264 373h1v3h-1zM265 372h1v1h-1zM266 369h1v3h-1zM267 366h1v3h-1zM268 363h1v3h-1zM268 363h2v2h-2zM269 361h1v2h-1zM270 358h1v3h-1zM271 357h1v1h-1zM272 354h1v3h-1zM273 352h1v2h-1zM274 349h1v3h-1zM275 345h1v4h-1zM276 342h1v3h-1zM277 340h1v2h-1zM278 337h1v3h-1zM279 332h1v5h-1zM280 329h1v3h-1zM281 327h1v2h-1zM282 324h1v3h-1zM283 323h1v1h-1zM284 320h1v3h-1zM285 317h1v3h-1zM286 314h1v3h-1zM287 310h1v4h-1zM288 307h1v3h-1zM289 307h1v1h-1zM289 307h2v2h-2zM290 304h1v3h-1zM291 299h1v5h-1zM292 297h1v2h-1zM292 297h2v2h-2zM293 296h1v1h-1zM294 293h1v3h-1zM295 289h1v4h-1zM296 287h1v2h-1zM296 287h2v2h-2zM297 284h1v3h-1zM298 282h1v2h-1zM299 281h1v1h-1zM299 281h2v2h-2zM300 279h1v2h-1zM301 275h1v4h-1zM302 272h1v3h-1zM303 270h1v2h-1zM304 267h1v3h-1zM305 265h1v2h-1zM306 263h1v2h-1zM307 258h1v5h-1zM308 256h1v2h-1zM309 256h1v1h-1zM309 256h2v2h-2zM310 254h1v2h-1zM311 249h1v5h-1zM312 247h1v2h-1zM312 247h2v2h-2zM313 245h1v2h-1zM314 243h1v2h-1zM315 242h1v1h-1zM316 240h1v2h-1zM317 235h1v5h-1zM318 233h1v2h-1zM318 233h2v2h-2zM319 232h1v1h-1zM320 230h1v2h-1zM321 228h1v2h-1zM322 226h1v2h-1zM323 224h1v2h-1zM324 222h1v2h-1zM325 218h1v4h-1zM326 216h1v2h-1zM326 216h2v2h-2zM327 217h1v1h-1zM328 215h1v2h-1zM329 212h1v3h-1zM330 210h1v2h-1zM331 208h1v2h-1zM331 208h2v2h-2zM332 206h1v2h-1zM333 204h1v2h-1zM334 202h1v2h-1zM335 202h1v1h-1zM336 201h1v1h-1zM337 198h1v3h-1zM338 197h1v1h-1zM339 195h1v2h-1zM340 194h1v1h-1zM341 191h1v3h-1zM342 189h1v2h-1zM343 189h1v1h-1zM343 189h2v2h-2zM344 187h1v2h-1zM345 188h1v2h-1zM346 188h1v1h-1zM347 184h1v4h-1zM347 184h2v2h-2zM348 183h1v1h-1zM349 181h1v2h-1zM350 179h1v2h-1zM351 179h1v1h-1zM352 178h1v1h-1zM353 176h1v2h-1zM354 176h1v1h-1zM355 176h1v1h-1zM356 175h1v1h-1zM357 174h1v1h-1zM357 174h2v2h-2zM358 173h1v1h-1zM358 173h2v2h-2zM359 174h1v2h-1zM360 174h1v1h-1zM361 174h1v1h-1zM361 174h2v2h-2zM362 173h1v1h-1zM363 172h1v1h-1zM364 171h1v1h-1zM364 171h2v2h-2zM365 171h1v1h-1zM366 170h1v1h-1zM367 169h1v1h-1zM368 168h1v1h-1zM369 169h1v2h-1zM370 169h1v1h-1zM371 168h1v1h-1zM372 168h1v1h-1zM373 169h1v2h-1zM374 170h1v1h-1zM375 170h1v1h-1zM376 170h1v1h-1zM376 170h2v2h-2zM377 170h1v1h-1zM378 170h1v1h-1zM378 170h2v2h-2zM379 170h1v1h-1zM380 170h1v1h-1zM381 169h1v1h-1zM382 170h1v1h-1zM383 169h1v1h-1zM384 170h1v1h-1zM385 171h1v3h-1zM386 173h1v1h-1zM387 173h1v1h-1zM388 173h1v1h-1zM389 174h1v2h-1zM390 176h1v1h-1zM391 173h1v3h-1zM392 174h1v1h-1zM392 174h2v2h-2zM393 175h1v1h-1zM394 176h1v1h-1zM395 176h1v1h-1zM395 176h2v2h-2zM396 177h1v1h-1zM397 178h1v4h-1zM398 182h1v1h-1zM398 182h2v2h-2zM399 181h1v1h-1zM400 182h1v1h-1zM401 183h1v2h-1zM402 185h1v1h-1zM402 185h2v2h-2zM403 186h1v4h-1zM404 190h1v1h-1zM405 190h1v1h-1zM406 191h1v2h-1zM406 192h2v2h-2zM407 193h1v1h-1zM408 194h1v1h-1zM409 195h1v1h-1zM410 196h1v2h-1zM410 197h2v2h-2zM411 198h1v2h-1zM412 200h1v1h-1zM413 201h1v1h-1zM414 202h1v1h-1zM415 203h1v1h-1zM416 204h1v2h-1zM416 205h2v2h-2zM417 206h1v2h-1zM418 208h1v2h-1zM419 210h1v1h-1zM420 211h1v2h-1zM421 213h1v1h-1zM422 214h1v2h-1zM423 216h1v4h-1zM424 220h1v2h-1zM425 222h1v2h-1zM426 224h1v2h-1zM427 226h1v3h-1zM428 229h1v2h-1zM429 231h1v1h-1zM430 232h1v2h-1zM431 234h1v3h-1zM432 237h1v2h-1zM433 239h1v4h-1zM434 243h1v3h-1zM435 244h1v1h-1zM436 245h1v2h-1zM437 247h1v5h-1zM438 252h1v2h-1zM438 253h2v2h-2zM439 254h1v1h-1zM440 255h1v2h-1zM441 257h1v5h-1zM442 262h1v3h-1zM443 265h1v2h-1zM444 267h1v3h-1zM445 270h1v2h-1zM446 272h1v3h-1zM447 274h1v1h-1zM447 274h2v2h-2zM448 275h1v2h-1zM448 276h2v2h-2zM449 277h1v4h-1zM450 281h1v2h-1zM451 283h1v3h-1zM452 286h1v3h-1zM453 289h1v2h-1zM454 291h1v3h-1zM455 294h1v3h-1zM456 297h1v2h-1zM457 299h1v2h-1zM458 301h1v3h-1zM458 303h2v2h-2zM459 304h1v2h-1zM460 306h1v3h-1zM461 309h1v4h-1zM461 312h2v2h-2zM462 313h1v2h-1zM462 314h2v2h-2zM463 315h1v4h-1zM464 319h1v3h-1zM465 322h1v2h-1zM465 323h2v2h-2zM466 324h1v3h-1zM466 326h2v2h-2zM467 327h1v1h-1zM468 328h1v3h-1zM469 331h1v2h-1zM470 333h1v3h-1zM471 336h1v4h-1zM472 340h1v3h-1zM473 343h1v3h-1zM474 346h1v2h-1zM475 348h1v5h-1zM476 353h1v3h-1zM476 355h2v2h-2zM477 356h1v1h-1zM478 357h1v2h-1zM479 359h1v3h-1zM480 362h1v3h-1zM481 365h1v3h-1zM482 368h1v3h-1zM483 370h1v1h-1zM484 371h1v3h-1zM484 373h2v2h-2zM485 374h1v6h-1zM486 380h1v3h-1zM487 383h1v2h-1zM488 385h1v2h-1zM488 386h2v2h-2zM489 387h1v1h-1zM490 388h1v3h-1zM491 391h1v2h-1zM492 393h1v3h-1zM493 396h1v3h-1zM494 399h1v3h-1zM494 401h2v2h-2zM495 402h1v2h-1zM495 403h2v2h-2zM496 404h1v2h-1zM497 406h1v3h-1zM498 409h1v2h-1zM499 411h1v4h-1zM499 414h2v2h-2zM500 415h1v3h-1zM500 417h2v2h-2zM501 416h1v1h-1zM501 416h2v2h-2zM502 417h1v2h-1zM503 419h1v6h-1zM504 425h1v2h-1zM505 427h1v2h-1zM506 429h1v2h-1zM507 431h1v2h-1zM508 433h1v3h-1zM509 435h1v1h-1zM510 436h1v2h-1zM511 438h1v4h-1zM512 442h1v2h-1zM513 444h1v3h-1zM514 447h1v2h-1zM515 449h1v3h-1zM516 452h1v2h-1zM517 453h1v1h-1zM518 454h1v2h-1zM519 456h1v1h-1zM520 457h1v2h-1zM521 459h1v3h-1zM522 462h1v2h-1zM523 464h1v3h-1zM523 466h2v2h-2zM524 467h1v2h-1zM525 469h1v1h-1zM526 470h1v1h-1zM527 471h1v2h-1zM528 473h1v2h-1zM529 475h1v1h-1zM530 476h1v2h-1zM531 478h1v1h-1zM532 479h1v1h-1zM533 480h1v2h-1zM534 482h1v1h-1zM535 483h1v3h-1zM535 485h2v2h-2zM536 486h1v1h-1zM537 487h1v1h-1zM538 488h1v1h-1zM539 489h1v1h-1zM539 489h2v2h-2zM540 490h1v2h-1zM541 491h1v1h-1zM542 492h1v1h-1zM542 492h2v2h-2zM543 493h1v1h-1zM544 494h1v1h-1zM545 495h1v4h-1zM545 498h2v2h-2zM546 499h1v1h-1zM547 497h1v2h-1zM548 498h1v1h-1zM549 499h1v4h-1zM550 502h1v1h-1zM551 499h1v3h-1zM552 500h1v1h-1zM553 501h1v2h-1zM554 503h1v1h-1zM555 504h1v1h-1zM556 504h1v1h-1zM557 505h1v2h-1zM558 506h1v1h-1zM559 507h1v1h-1zM560 508h1v1h-1zM561 505h1v3h-1zM561 505h2v2h-2zM562 505h1v1h-1zM562 505h2v2h-2zM563 504h1v1h-1zM564 504h1v1h-1zM565 505h1v1h-1zM565 505h2v2h-2zM566 505h1v1h-1zM567 506h1v1h-1zM568 506h1v1h-1zM569 507h1v2h-1zM570 507h1v1h-1zM571 503h1v4h-1zM572 503h1v1h-1zM573 504h1v1h-1zM573 504h2v2h-2zM574 503h1v1h-1zM574 503h2v2h-2zM575 504h1v2h-1zM576 504h1v1h-1zM577 504h1v1h-1zM578 503h1v1h-1zM579 504h1v1h-1zM580 504h1v1h-1zM581 503h1v1h-1zM581 503h2v2h-2zM582 502h1v1h-1zM583 499h1v3h-1zM584 499h1v1h-1zM585 498h1v1h-1zM586 497h1v1h-1zM587 495h1v2h-1zM588 494h1v1h-1zM589 494h1v1h-1zM590 493h1v1h-1zM591 492h1v1h-1zM592 491h1v1h-1zM593 492h1v1h-1zM593 492h2v2h-2zM594 491h1v1h-1zM595 487h1v4h-1zM596 485h1v2h-1zM597 486h1v2h-1zM598 485h1v2h-1zM599 485h1v1h-1zM600 483h1v2h-1zM600 483h2v2h-2zM601 480h1v3h-1zM602 479h1v1h-1zM603 477h1v2h-1zM604 476h1v1h-1zM604 476h2v2h-2zM605 474h1v2h-1zM605 474h2v2h-2zM606 472h1v2h-1zM607 471h1v1h-1zM608 469h1v2h-1zM608 469h2v2h-2zM609 467h1v2h-1zM610 465h1v2h-1zM610 465h2v2h-2zM611 461h1v4h-1zM612 459h1v2h-1zM613 459h1v1h-1zM614 457h1v2h-1zM614 457h2v2h-2zM615 457h1v1h-1zM616 455h1v2h-1zM617 454h1v1h-1zM618 452h1v2h-1zM619 446h1v6h-1zM620 444h1v2h-1zM621 444h1v1h-1zM622 442h1v2h-1zM622 442h2v2h-2zM623 437h1v5h-1zM624 435h1v2h-1zM625 436h1v1h-1zM626 434h1v2h-1zM627 430h1v4h-1zM628 428h1v2h-1zM628 428h2v2h-2zM629 423h1v5h-1zM630 421h1v2h-1zM631 422h1v1h-1zM632 419h1v3h-1zM633 416h1v3h-1zM634 414h1v2h-1zM634 414h2v2h-2zM635 410h1v4h-1zM636 408h1v2h-1zM636 408h2v2h-2zM637 409h1v1h-1zM638 406h1v3h-1zM639 401h1v5h-1zM639 401h2v2h-2zM640 399h1v2h-1zM641 396h1v3h-1zM642 393h1v3h-1zM643 390h1v3h-1zM644 387h1v3h-1zM645 385h1v2h-1zM646 382h1v3h-1zM647 381h1v1h-1zM648 378h1v3h-1zM649 376h1v2h-1zM650 373h1v3h-1zM651 371h1v2h-1zM652 368h1v3h-1zM653 363h1v5h-1zM654 361h1v2h-1zM655 358h1v3h-1zM656 355h1v3h-1zM657 352h1v3h-1zM657 352h2v2h-2zM658 350h1v2h-1zM658 350h2v2h-2zM659 348h1v2h-1zM660 345h1v3h-1zM661 342h1v3h-1zM662 339h1v3h-1zM663 337h1v2h-1zM664 334h1v3h-1zM665 331h1v3h-1zM666 328h1v3h-1zM667 326h1v2h-1zM667 326h2v2h-2zM668 323h1v3h-1zM669 320h1v3h-1zM670 317h1v3h-1zM671 313h1v4h-1zM672 310h1v3h-1zM672 310h2v2h-2zM673 308h1v2h-1zM673 308h2v2h-2zM674 305h1v3h-1zM674 305h2v2h-2zM675 305h1v1h-1zM676 302h1v3h-1zM677 296h1v6h-1zM678 293h1v3h-1zM678 293h2v2h-2zM679 294h1v2h-1zM680 292h1v3h-1zM680 292h2v2h-2zM681 287h1v5h-1zM681 287h2v2h-2zM682 284h1v3h-1zM683 282h1v2h-1zM683 282h2v2h-2zM684 279h1v3h-1zM684 279h2v2h-2zM685 277h1v2h-1zM686 275h1v2h-1zM687 272h1v3h-1zM688 270h1v2h-1zM688 270h2v2h-2zM689 267h1v3h-1zM689 267h2v2h-2zM690 265h1v2h-1zM690 265h2v2h-2zM691 261h1v4h-1zM692 259h1v2h-1zM693 257h1v2h-1zM694 254h1v3h-1zM695 253h1v1h-1zM696 251h1v2h-1zM697 248h1v3h-1zM698 245h1v3h-1zM699 243h1v2h-1zM700 241h1v2h-1zM700 241h2v2h-2zM701 238h1v3h-1zM702 236h1v2h-1zM703 234h1v2h-1zM704 232h1v2h-1zM705 229h1v3h-1zM706 227h1v2h-1zM706 227h2v2h-2zM707 226h1v1h-1zM708 224h1v2h-1zM709 222h1v2h-1zM710 220h1v2h-1zM710 220h2v2h-2zM711 217h1v3h-1zM712 215h1v2h-1zM713 215h1v1h-1zM714 213h1v2h-1zM715 211h1v2h-1zM716 209h1v2h-1zM717 207h1v2h-1zM718 206h1v1h-1zM718 206h2v2h-2zM719 202h1v4h-1zM720 200h1v2h-1zM721 197h1v3h-1zM722 196h1v1h-1zM723 196h1v1h-1zM724 194h1v2h-1zM725 195h1v1h-1zM726 193h1v2h-1zM727 191h1v2h-1zM727 191h2v2h-2zM728 190h1v1h-1zM729 187h1v3h-1zM730 186h1v1h-1zM731 186h1v1h-1zM732 184h1v2h-1zM732 184h2v2h-2zM733 183h1v1h-1zM733 183h2v2h-2zM734 181h1v2h-1zM735 182h1v1h-1zM736 181h1v1h-1zM737 179h1v2h-1zM738 178h1v1h-1zM739 177h1v1h-1zM739 177h2v2h-2zM740 176h1v1h-1zM741 176h1v1h-1zM742 175h1v1h-1zM742 175h2v2h-2zM743 176h1v1h-1zM744 175h1v1h-1zM745 173h1v2h-1zM746 172h1v1h-1zM746 172h2v2h-2zM747 170h1v2h-1zM747 170h2v2h-2zM748 169h1v1h-1zM749 170h1v2h-1zM750 171h1v1h-1zM750 171h2v2h-2zM751 170h1v1h-1zM751 170h2v2h-2zM752 169h1v1h-1zM752 169h2v2h-2zM753 169h1v1h-1zM754 169h1v1h-1zM755 170h1v1h-1zM755 170h2v2h-2zM756 170h1v1h-1zM756 170h2v2h-2zM757 168h1v2h-1zM758 167h1v1h-1zM759 168h1v2h-1zM760 169h1v1h-1zM761 168h1v1h-1zM761 168h2v2h-2zM762 168h1v1h-1zM763 169h1v1h-1zM764 169h1v1h-1zM765 170h1v2h-1zM766 171h1v1h-1zM766 171h2v2h-2zM767 170h1v1h-1zM768 170h1v1h-1zM769 171h1v1h-1zM770 172h1v1h-1zM770 172h2v2h-2zM771 173h1v2h-1zM772 174h1v1h-1zM772 174h2v2h-2zM773 172h1v2h-1zM774 172h1v1h-1zM775 173h1v2h-1zM775 174h2v2h-2zM776 175h1v1h-1zM777 175h1v1h-1zM778 176h1v1h-1zM778 176h2v2h-2zM779 176h1v1h-1zM780 177h1v1h-1zM781 178h1v3h-1zM782 181h1v1h-1zM783 181h1v1h-1zM784 182h1v1h-1zM785 183h1v3h-1zM786 186h1v1h-1zM786 186h2v2h-2zM787 186h1v1h-1zM788 187h1v2h-1zM789 188h1v1h-1zM790 189h1v1h-1zM790 189h2v2h-2zM791 190h1v2h-1zM792 192h1v1h-1zM793 193h1v2h-1zM794 195h1v2h-1zM795 196h1v1h-1zM796 197h1v1h-1zM797 198h1v1h-1zM798 199h1v2h-1zM799 201h1v3h-1zM800 204h1v2h-1zM801 206h1v2h-1zM802 208h1v2h-1zM803 210h1v2h-1zM804 212h1v1h-1zM805 212h1v1h-1zM806 213h1v2h-1zM807 215h1v2h-1zM807 216h2v2h-2zM808 217h1v2h-1zM809 219h1v4h-1zM809 222h2v2h-2zM810 223h1v2h-1zM811 225h1v1h-1zM812 226h1v2h-1zM813 228h1v2h-1zM814 230h1v2h-1zM815 232h1v4h-1zM815 235h2v2h-2zM816 236h1v2h-1zM816 237h2v2h-2zM817 238h1v1h-1zM818 239h1v2h-1zM819 241h1v4h-1zM820 245h1v2h-1zM821 247h1v1h-1zM822 248h1v3h-1zM822 250h2v2h-2zM823 250h1v1h-1zM824 251h1v3h-1zM825 254h1v3h-1zM826 257h1v3h-1zM827 260h1v2h-1zM827 261h2v2h-2zM828 262h1v2h-1zM828 263h2v2h-2zM829 264h1v3h-1zM829 266h2v2h-2zM830 267h1v2h-1zM831 269h1v5h-1zM832 274h1v2h-1zM833 276h1v4h-1zM833 279h2v2h-2zM834 280h1v3h-1zM834 282h2v2h-2zM835 281h1v1h-1zM836 282h1v2h-1zM837 284h1v4h-1zM837 287h2v2h-2zM838 288h1v3h-1zM839 291h1v3h-1zM840 294h1v2h-1zM841 296h1v4h-1zM841 299h2v2h-2zM842 300h1v2h-1zM843 302h1v2h-1zM844 304h1v3h-1zM845 307h1v3h-1zM846 310h1v2h-1zM847 312h1v3h-1zM848 315h1v3h-1zM849 318h1v4h-1zM850 322h1v3h-1zM851 325h1v1h-1zM851 325h2v2h-2zM852 326h1v3h-1zM853 329h1v3h-1zM853 331h2v2h-2zM854 332h1v3h-1zM855 335h1v2h-1zM856 337h1v3h-1zM857 340h1v2h-1zM858 342h1v3h-1zM859 345h1v3h-1zM859 347h2v2h-2zM860 348h1v3h-1zM861 351h1v3h-1zM862 354h1v2h-1zM862 355h2v2h-2zM863 356h1v4h-1zM864 360h1v3h-1zM865 363h1v3h-1zM866 366h1v3h-1zM867 367h1v1h-1zM867 367h2v2h-2zM868 368h1v3h-1zM868 370h2v2h-2zM869 371h1v4h-1zM870 375h1v3h-1zM871 378h1v4h-1zM872 382h1v2h-1zM873 384h1v3h-1zM874 387h1v3h-1zM875 390h1v2h-1zM875 391h2v2h-2zM876 392h1v3h-1zM876 394h2v2h-2zM877 395h1v1h-1zM877 395h2v2h-2zM878 396h1v2h-1zM879 398h1v4h-1zM880 402h1v2h-1zM881 404h1v4h-1zM881 407h2v2h-2zM882 408h1v3h-1zM883 411h1v1h-1zM883 411h2v2h-2zM884 412h1v2h-1zM885 414h1v1h-1zM886 415h1v3h-1zM887 418h1v3h-1zM888 421h1v2h-1zM888 422h2v2h-2zM889 423h1v1h-1zM889 423h2v2h-2zM890 424h1v2h-1zM891 426h1v4h-1zM892 430h1v2h-1zM893 432h1v5h-1zM894 437h1v2h-1zM895 439h1v2h-1zM896 441h1v2h-1zM897 443h1v1h-1zM898 444h1v2h-1zM899 446h1v4h-1zM899 449h2v2h-2zM900 450h1v2h-1zM901 452h1v1h-1zM901 452h2v2h-2zM902 453h1v2h-1zM903 453h1v1h-1zM904 454h1v2h-1zM905 456h1v4h-1zM906 460h1v2h-1zM907 462h1v3h-1zM908 465h1v2h-1zM909 467h1v3h-1zM910 470h1v1h-1zM911 471h1v1h-1zM911 471h2v2h-2zM912 472h1v2h-1zM913 474h1v1h-1zM914 475h1v1h-1zM915 476h1v3h-1zM916 479h1v1h-1zM916 479h2v2h-2zM917 480h1v3h-1zM918 483h1v2h-1zM919 482h1v2h-1zM920 483h1v1h-1zM921 484h1v2h-1zM921 485h2v2h-2zM922 486h1v1h-1zM923 487h1v3h-1zM924 490h1v1h-1zM924 490h2v2h-2zM925 490h1v1h-1zM926 491h1v1h-1zM927 491h1v1h-1zM928 492h1v1h-1zM929 493h1v4h-1zM930 497h1v1h-1zM931 496h1v1h-1zM932 497h1v1h-1zM933 497h1v1h-1zM934 498h1v1h-1zM935 499h1v2h-1zM935 500h2v2h-2zM936 501h1v1h-1zM936 501h2v2h-2zM937 501h1v1h-1zM937 501h2v2h-2zM938 501h1v1h-1zM939 502h1v2h-1zM940 504h1v1h-1zM941 504h1v1h-1zM941 504h2v2h-2zM942 504h1v1h-1zM943 505h1v1h-1zM943 505h2v2h-2zM944 506h1v1h-1zM945 504h1v2h-1zM946 505h1v1h-1zM947 506h1v1h-1zM947 506h2v2h-2zM948 506h1v1h-1zM949 505h1v1h-1zM950 505h1v1h-1zM951 506h1v1h-1zM951 506h2v2h-2zM952 506h1v1h-1zM953 506h1v1h-1zM954 506h1v1h-1zM955 507h1v1h-1zM956 507h1v1h-1zM957 505h1v2h-1zM958 504h1v1h-1zM959 504h1v1h-1zM960 504h1v1h-1zM961 503h1v1h-1zM962 503h1v1h-1zM963 504h1v1h-1zM964 504h1v1h-1zM965 505h1v1h-1zM966 504h1v1h-1zM967 500h1v4h-1zM968 499h1v1h-1zM969 498h1v1h-1zM970 497h1v1h-1zM971 497h1v1h-1zM972 496h1v1h-1zM972 496h2v2h-2zM973 495h1v1h-1zM974 494h1v1h-1zM975 495h1v1h-1zM975 495h2v2h-2zM976 494h1v1h-1zM977 491h1v3h-1zM978 490h1v1h-1zM979 489h1v1h-1zM980 488h1v1h-1zM980 488h2v2h-2zM981 488h1v1h-1zM982 487h1v1h-1zM983 485h1v2h-1zM984 484h1v1h-1zM985 483h1v1h-1zM985 483h2v2h-2zM986 481h1v2h-1zM987 479h1v2h-1zM988 477h1v2h-1zM988 477h2v2h-2zM989 476h1v1h-1zM990 474h1v2h-1zM991 474h1v1h-1zM992 472h1v2h-1zM993 471h1v1h-1zM994 470h1v1h-1zM994 470h2v2h-2zM995 466h1v4h-1zM996 464h1v2h-1zM997 461h1v3h-1zM998 459h1v2h-1zM999 458h1v1h-1zM1000 456h1v2h-1zM1001 454h1v2h-1zM1002 452h1v2h-1zM1002 452h2v2h-2zM1003 449h1v3h-1zM1004 447h1v2h-1zM1005 448h1v1h-1zM1006 446h1v2h-1zM1007 443h1v3h-1zM1008 441h1v2h-1zM1009 439h1v2h-1zM1010 437h1v2h-1zM1011 433h1v4h-1zM1011 433h2v2h-2zM1012 431h1v2h-1zM1012 431h2v2h-2zM1013 430h1v1h-1zM1013 430h2v2h-2zM1014 428h1v2h-1zM1015 424h1v4h-1zM1016 421h1v3h-1zM1017 417h1v4h-1zM1018 415h1v2h-1zM1019 414h1v1h-1zM1020 411h1v3h-1z" fill="#ffff00"/>
<path d="M21 254h1v1h-1zM22 255h1v3h-1zM23 258h1v2h-1zM24 260h1v2h-1zM25 262h1v2h-1zM26 264h1v3h-1zM27 267h1v3h-1zM27 269h2v2h-2zM28 270h1v3h-1zM29 273h1v4h-1zM30 277h1v3h-1zM31 280h1v5h-1zM32 285h1v3h-1zM32 287h2v2h-2zM33 287h1v1h-1zM34 288h1v3h-1zM35 291h1v3h-1zM36 294h1v3h-1zM37 296h1v1h-1zM38 297h1v3h-1zM39 300h1v3h-1zM40 303h1v3h-1zM40 305h2v2h-2zM41 306h1v5h-1zM42 311h1v3h-1zM43 313h1v1h-1zM43 313h2v2h-2zM44 314h1v3h-1zM45 317h1v3h-1zM45 319h2v2h-2zM46 320h1v2h-1zM47 322h1v5h-1zM47 326h2v2h-2zM48 327h1v3h-1zM49 330h1v4h-1zM50 334h1v2h-1zM50 335h2v2h-2zM51 336h1v2h-1zM52 338h1v3h-1zM53 341h1v4h-1zM54 345h1v3h-1zM55 348h1v4h-1zM56 352h1v3h-1zM57 354h1v1h-1zM58 355h1v3h-1zM59 358h1v5h-1zM60 363h1v3h-1zM61 366h1v3h-1zM62 369h1v3h-1zM63 372h1v2h-1zM64 374h1v3h-1zM65 377h1v3h-1zM66 380h1v3h-1zM66 382h2v2h-2zM67 383h1v2h-1zM67 384h2v2h-2zM68 385h1v3h-1zM69 388h1v2h-1zM70 390h1v3h-1zM71 393h1v3h-1zM72 396h1v3h-1zM73 399h1v2h-1zM74 401h1v3h-1zM75 404h1v3h-1zM76 407h1v2h-1zM76 408h2v2h-2zM77 409h1v2h-1zM78 411h1v3h-1zM79 414h1v4h-1zM80 418h1v3h-1zM81 421h1v1h-1zM82 422h1v3h-1zM82 424h2v2h-2zM83 425h1v3h-1zM83 427h2v2h-2zM84 428h1v3h-1zM85 431h1v1h-1zM86 432h1v2h-1zM87 434h1v3h-1zM87 436h2v2h-2zM88 437h1v3h-1zM89 440h1v2h-1zM90 442h1v2h-1zM91 444h1v3h-1zM92 447h1v3h-1zM92 449h2v2h-2zM93 448h1v1h-1zM93 448h2v2h-2zM94 449h1v2h-1zM95 451h1v5h-1zM96 456h1v3h-1zM96 458h2v2h-2zM97 458h1v1h-1zM97 458h2v2h-2zM98 459h1v2h-1zM99 461h1v5h-1zM100 466h1v2h-1zM101 468h1v1h-1zM102 469h1v2h-1zM103 471h1v2h-1zM104 473h1v2h-1zM105 475h1v1h-1zM106 476h1v2h-1zM107 478h1v4h-1zM108 482h1v1h-1zM109 481h1v1h-1zM110 482h1v2h-1zM111 484h1v2h-1zM112 486h1v2h-1zM113 487h1v1h-1zM114 488h1v2h-1zM115 490h1v3h-1zM116 493h1v1h-1zM117 494h1v2h-1zM118 496h1v1h-1zM119 497h1v1h-1zM119 497h2v2h-2zM120 498h1v2h-1zM121 499h1v1h-1zM122 500h1v1h-1zM123 501h1v2h-1zM124 503h1v1h-1zM125 504h1v1h-1zM126 505h1v1h-1zM127 506h1v1h-1zM128 507h1v1h-1zM128 507h2v2h-2zM129 508h1v1h-1zM130 509h1v1h-1zM131 508h1v1h-1zM132 509h1v1h-1zM133 510h1v1h-1zM134 510h1v1h-1zM135 511h1v2h-1zM136 512h1v1h-1zM137 510h1v2h-1zM138 511h1v1h-1zM139 512h1v1h-1zM140 512h1v1h-1zM141 513h1v4h-1zM142 516h1v1h-1zM142 516h2v2h-2zM143 515h1v1h-1zM144 515h1v1h-1zM144 515h2v2h-2zM145 516h1v2h-1zM146 517h1v1h-1zM147 514h1v3h-1zM148 514h1v1h-1zM149 515h1v3h-1zM150 517h1v1h-1zM151 516h1v1h-1zM152 516h1v1h-1zM153 515h1v1h-1zM154 515h1v1h-1zM155 512h1v3h-1zM156 512h1v1h-1zM157 513h1v1h-1zM158 513h1v1h-1zM159 511h1v2h-1zM160 511h1v1h-1zM161 509h1v2h-1zM162 509h1v1h-1zM162 509h2v2h-2zM163 509h1v1h-1zM164 508h1v1h-1zM165 508h1v1h-1zM165 508h2v2h-2zM166 507h1v1h-1zM166 507h2v2h-2zM167 505h1v2h-1zM168 505h1v1h-1zM169 505h1v1h-1zM170 504h1v1h-1zM171 502h1v2h-1zM172 501h1v1h-1zM173 500h1v1h-1zM173 500h2v2h-2zM174 499h1v1h-1zM175 497h1v2h-1zM176 495h1v2h-1zM176 495h2v2h-2zM177 496h1v1h-1zM177 496h2v2h-2zM178 494h1v2h-1zM179 492h1v2h-1zM180 491h1v1h-1zM181 488h1v3h-1zM181 488h2v2h-2zM182 487h1v1h-1zM182 487h2v2h-2zM183 486h1v1h-1zM184 485h1v1h-1zM185 482h1v3h-1zM186 480h1v2h-1zM187 480h1v1h-1zM187 480h2v2h-2zM188 478h1v2h-1zM189 478h1v1h-1zM190 476h1v2h-1zM191 474h1v2h-1zM192 472h1v2h-1zM193 470h1v2h-1zM194 468h1v2h-1zM195 464h1v4h-1zM195 464h2v2h-2zM196 462h1v2h-1zM196 462h2v2h-2zM197 460h1v2h-1zM197 460h2v2h-2zM198 458h1v2h-1zM198 458h2v2h-2zM199 455h1v3h-1zM199 455h2v2h-2zM200 453h1v2h-1zM200 453h2v2h-2zM201 452h1v1h-1zM202 450h1v2h-1zM202 450h2v2h-2zM203 449h1v1h-1zM204 447h1v2h-1zM205 443h1v4h-1zM205 443h2v2h-2zM206 440h1v3h-1zM207 438h1v2h-1zM208 436h1v2h-1zM209 434h1v2h-1zM210 431h1v3h-1zM211 428h1v3h-1zM212 426h1v2h-1zM213 424h1v2h-1zM213 424h2v2h-2zM214 421h1v3h-1zM215 416h1v5h-1zM216 414h1v2h-1zM217 413h1v1h-1zM218 410h1v3h-1zM219 408h1v2h-1zM220 405h1v3h-1zM221 402h1v3h-1zM222 400h1v2h-1zM222 400h2v2h-2zM223 397h1v3h-1zM224 394h1v3h-1zM224 394h2v2h-2zM225 391h1v3h-1zM226 389h1v2h-1zM227 385h1v4h-1zM228 382h1v3h-1zM228 382h2v2h-2zM229 380h1v2h-1zM230 377h1v3h-1zM231 375h1v2h-1zM232 373h1v2h-1zM233 367h1v6h-1zM233 367h2v2h-2zM234 365h1v2h-1zM235 363h1v2h-1zM236 360h1v3h-1zM237 357h1v3h-1zM238 354h1v3h-1zM239 351h1v3h-1zM240 348h1v3h-1zM241 346h1v2h-1zM242 343h1v3h-1zM242 343h2v2h-2zM243 340h1v3h-1zM244 337h1v3h-1zM244 337h2v2h-2zM245 335h1v2h-1zM246 332h1v3h-1zM247 330h1v2h-1zM248 327h1v3h-1zM248 327h2v2h-2zM249 322h1v5h-1zM250 319h1v3h-1zM250 319h2v2h-2zM251 316h1v3h-1zM252 314h1v2h-1zM253 310h1v4h-1zM254 307h1v3h-1zM255 307h1v1h-1zM256 304h1v3h-1zM257 299h1v5h-1zM258 297h1v2h-1zM259 295h1v2h-1zM260 293h1v2h-1zM261 289h1v4h-1zM261 289h2v2h-2zM262 286h1v3h-1zM262 286h2v2h-2zM263 285h1v1h-1zM264 282h1v3h-1zM265 277h1v5h-1zM266 274h1v3h-1zM267 272h1v2h-1zM268 269h1v3h-1zM269 267h1v2h-1zM270 264h1v3h-1zM270 264h2v2h-2zM271 262h1v2h-1zM271 262h2v2h-2zM272 260h1v2h-1zM272 260h2v2h-2zM273 257h1v3h-1zM274 254h1v3h-1zM274 254h2v2h-2zM275 250h1v4h-1zM276 247h1v3h-1zM277 247h1v1h-1zM277 247h2v2h-2zM278 245h1v2h-1zM278 245h2v2h-2zM279 242h1v3h-1zM280 240h1v2h-1zM280 240h2v2h-2zM281 238h1v2h-1zM281 238h2v2h-2zM282 236h1v2h-1zM282 236h2v2h-2zM283 231h1v5h-1zM284 229h1v2h-1zM285 228h1v1h-1zM285 228h2v2h-2zM286 226h1v2h-1zM287 225h1v1h-1zM288 223h1v2h-1zM289 221h1v2h-1zM290 219h1v2h-1zM291 214h1v5h-1zM292 212h1v2h-1zM293 209h1v3h-1zM294 207h1v2h-1zM295 206h1v1h-1zM295 206h2v2h-2zM296 204h1v2h-1zM297 203h1v1h-1zM298 201h1v2h-1zM299 201h1v1h-1zM299 201h2v2h-2zM300 199h1v2h-1zM301 195h1v4h-1zM302 194h1v1h-1zM303 193h1v1h-1zM303 193h2v2h-2zM304 191h1v2h-1zM305 191h1v1h-1zM306 190h1v1h-1zM307 186h1v4h-1zM308 184h1v2h-1zM309 182h1v2h-1zM310 181h1v1h-1zM311 181h1v1h-1zM311 181h2v2h-2zM312 180h1v1h-1zM313 176h1v4h-1zM314 175h1v1h-1zM315 176h1v3h-1zM316 177h1v1h-1zM317 172h1v5h-1zM318 171h1v1h-1zM319 172h1v3h-1zM320 173h1v1h-1zM320 173h2v2h-2zM321 170h1v3h-1zM322 169h1v1h-1zM322 169h2v2h-2zM323 169h1v1h-1zM324 169h1v1h-1zM324 169h2v2h-2zM325 168h1v1h-1zM326 167h1v1h-1zM327 166h1v1h-1zM328 165h1v1h-1zM329 165h1v1h-1zM330 164h1v1h-1zM331 164h1v1h-1zM332 163h1v1h-1zM333 162h1v1h-1zM334 162h1v1h-1zM334 162h2v2h-2zM335 163h1v1h-1zM336 163h1v1h-1zM336 163h2v2h-2zM337 161h1v2h-1zM338 161h1v1h-1zM339 162h1v2h-1zM340 163h1v1h-1zM341 164h1v1h-1zM342 164h1v1h-1zM343 161h1v3h-1zM344 161h1v1h-1zM344 161h2v2h-2zM345 162h1v1h-1zM346 163h1v1h-1zM347 162h1v1h-1zM348 163h1v1h-1zM348 163h2v2h-2zM349 164h1v1h-1zM350 164h1v1h-1zM351 164h1v1h-1zM352 165h1v1h-1zM353 166h1v2h-1zM354 167h1v1h-1zM354 167h2v2h-2zM355 167h1v1h-1zM356 168h1v1h-1zM356 168h2v2h-2zM357 169h1v2h-1zM358 170h1v1h-1zM359 171h1v1h-1zM360 172h1v1h-1zM361 172h1v1h-1zM362 173h1v1h-1zM363 173h1v1h-1zM364 174h1v2h-1zM365 175h1v1h-1zM366 176h1v1h-1zM366 176h2v2h-2zM367 177h1v4h-1zM368 181h1v1h-1zM369 180h1v1h-1zM370 181h1v1h-1zM370 181h2v2h-2zM371 182h1v5h-1zM372 187h1v1h-1zM373 188h1v2h-1zM374 190h1v1h-1zM374 190h2v2h-2zM375 189h1v1h-1zM376 190h1v2h-1zM377 192h1v2h-1zM378 194h1v2h-1zM379 196h1v1h-1zM380 197h1v2h-1zM381 199h1v2h-1zM382 201h1v2h-1zM383 201h1v1h-1zM384 202h1v2h-1zM385 204h1v4h-1zM386 208h1v2h-1zM387 210h1v3h-1zM388 213h1v2h-1zM389 215h1v3h-1zM390 218h1v2h-1zM391 220h1v2h-1zM392 222h1v2h-1zM393 223h1v1h-1zM394 224h1v3h-1zM395 227h1v2h-1zM396 229h1v2h-1zM397 231h1v2h-1zM398 233h1v3h-1zM399 236h1v1h-1zM400 237h1v3h-1zM401 240h1v4h-1zM402 244h1v2h-1zM403 246h1v3h-1zM403 248h2v2h-2zM404 249h1v2h-1zM405 250h1v1h-1zM405 250h2v2h-2zM406 251h1v3h-1zM406 253h2v2h-2zM407 254h1v5h-1zM407 258h2v2h-2zM408 259h1v2h-1zM409 261h1v4h-1zM410 265h1v2h-1zM411 267h1v2h-1zM411 268h2v2h-2zM412 269h1v3h-1zM413 272h1v1h-1zM414 273h1v3h-1zM415 276h1v4h-1zM416 280h1v3h-1zM416 282h2v2h-2zM417 283h1v2h-1zM418 285h1v2h-1zM419 287h1v3h-1zM420 290h1v3h-1zM421 293h1v3h-1zM422 296h1v3h-1zM422 298h2v2h-2zM423 299h1v5h-1zM424 304h1v2h-1zM425 306h1v2h-1zM425 307h2v2h-2zM426 308h1v2h-1zM427 310h1v3h-1zM428 313h1v2h-1zM429 315h1v2h-1zM430 317h1v3h-1zM431 320h1v3h-1zM432 323h1v3h-1zM433 326h1v2h-1zM434 328h1v3h-1zM435 331h1v5h-1zM436 336h1v3h-1zM437 339h1v2h-1zM438 341h1v3h-1zM438 343h2v2h-2zM439 344h1v5h-1zM439 348h2v2h-2zM440 349h1v3h-1zM441 352h1v3h-1zM442 355h1v3h-1zM443 358h1v2h-1zM444 360h1v3h-1zM445 363h1v2h-1zM446 365h1v3h-1zM447 368h1v3h-1zM447 370h2v2h-2zM448 371h1v3h-1zM449 374h1v2h-1zM450 376h1v2h-1zM450 377h2v2h-2zM451 378h1v4h-1zM452 382h1v3h-1zM453 385h1v2h-1zM454 387h1v3h-1zM455 390h1v6h-1zM456 396h1v2h-1zM457 396h1v1h-1zM457 396h2v2h-2zM458 397h1v3h-1zM459 400h1v5h-1zM460 405h1v2h-1zM460 406h2v2h-2zM461 407h1v2h-1zM462 409h1v3h-1zM463 412h1v3h-1zM464 415h1v2h-1zM465 416h1v1h-1zM465 416h2v2h-2zM466 417h1v3h-1zM467 420h1v6h-1zM468 426h1v2h-1zM469 428h1v4h-1zM470 432h1v3h-1zM471 435h1v1h-1zM471 435h2v2h-2zM472 436h1v3h-1zM473 437h1v1h-1zM474 438h1v2h-1zM475 440h1v4h-1zM476 444h1v3h-1zM477 447h1v1h-1zM478 448h1v2h-1zM478 449h2v2h-2zM479 450h1v6h-1zM480 456h1v2h-1zM481 457h1v1h-1zM482 458h1v2h-1zM483 460h1v2h-1zM484 462h1v2h-1zM485 463h1v1h-1zM486 464h1v2h-1zM486 465h2v2h-2zM487 466h1v3h-1zM487 468h2v2h-2zM488 469h1v2h-1zM489 471h1v1h-1zM490 472h1v2h-1zM491 474h1v3h-1zM492 477h1v2h-1zM492 478h2v2h-2zM493 479h1v2h-1zM494 481h1v2h-1zM495 483h1v3h-1zM496 486h1v2h-1zM497 486h1v1h-1zM498 487h1v1h-1zM499 488h1v3h-1zM500 491h1v2h-1zM500 492h2v2h-2zM501 493h1v1h-1zM502 494h1v2h-1zM502 495h2v2h-2zM503 495h1v1h-1zM504 496h1v1h-1zM504 496h2v2h-2zM505 497h1v4h-1zM506 501h1v2h-1zM507 502h1v1h-1zM508 503h1v1h-1zM508 503h2v2h-2zM509 504h1v1h-1zM510 505h1v1h-1zM511 503h1v2h-1zM512 504h1v1h-1zM513 505h1v2h-1zM514 507h1v1h-1zM515 507h1v1h-1zM516 507h1v1h-1zM517 508h1v3h-1zM518 510h1v1h-1zM519 511h1v2h-1zM520 512h1v1h-1zM521 513h1v2h-1zM522 514h1v1h-1zM523 511h1v3h-1zM524 511h1v1h-1zM525 512h1v3h-1zM526 514h1v1h-1zM527 513h1v1h-1zM528 513h1v1h-1zM529 514h1v1h-1zM530 514h1v1h-1zM531 515h1v3h-1zM532 517h1v1h-1zM532 517h2v2h-2zM533 514h1v3h-1zM534 514h1v1h-1zM534 514h2v2h-2zM535 514h1v1h-1zM536 514h1v1h-1zM537 515h1v2h-1zM537 516h2v2h-2zM538 515h1v1h-1zM539 513h1v2h-1zM540 513h1v1h-1zM541 514h1v1h-1zM542 513h1v1h-1zM543 513h1v1h-1zM544 512h1v1h-1zM545 512h1v1h-1zM546 512h1v1h-1zM546 512h2v2h-2zM547 511h1v1h-1zM548 510h1v1h-1zM549 511h1v1h-1zM550 510h1v1h-1zM551 507h1v3h-1zM551 507h2v2h-2zM552 506h1v1h-1zM553 503h1v3h-1zM554 502h1v1h-1zM555 503h1v1h-1zM556 502h1v1h-1zM557 500h1v2h-1zM558 499h1v1h-1zM559 496h1v3h-1zM560 495h1v1h-1zM560 495h2v2h-2zM561 496h1v1h-1zM562 494h1v2h-1zM563 494h1v1h-1zM564 493h1v1h-1zM565 492h1v1h-1zM566 491h1v1h-1zM567 489h1v2h-1zM567 489h2v2h-2zM568 487h1v2h-1zM569 484h1v3h-1zM570 482h1v2h-1zM570 482h2v2h-2zM571 483h1v1h-1zM571 483h2v2h-2zM572 481h1v2h-1zM573 477h1v4h-1zM574 475h1v2h-1zM575 473h1v2h-1zM576 471h1v2h-1zM577 470h1v1h-1zM578 468h1v2h-1zM579 467h1v1h-1zM580 465h1v2h-1zM580 465h2v2h-2zM581 463h1v2h-1zM582 461h1v2h-1zM583 458h1v3h-1zM583 458h2v2h-2zM584 456h1v2h-1zM585 452h1v4h-1zM586 449h1v3h-1zM587 450h1v2h-1zM588 449h1v2h-1zM589 445h1v4h-1zM590 443h1v2h-1zM591 442h1v1h-1zM592 440h1v2h-1zM592 440h2v2h-2zM593 435h1v5h-1zM594 432h1v3h-1zM595 431h1v1h-1zM595 431h2v2h-2zM596 428h1v3h-1zM596 428h2v2h-2zM597 427h1v1h-1zM598 424h1v3h-1zM599 420h1v4h-1zM600 417h1v3h-1zM600 417h2v2h-2zM601 418h1v1h-1zM602 415h1v3h-1zM603 411h1v4h-1zM603 411h2v2h-2zM604 408h1v3h-1zM605 404h1v4h-1zM606 402h1v2h-1zM606 402h2v2h-2zM607 400h1v2h-1zM607 400h2v2h-2zM608 398h1v2h-1zM609 394h1v4h-1zM610 391h1v3h-1zM611 391h1v1h-1zM612 388h1v3h-1zM613 382h1v6h-1zM614 380h1v2h-1zM615 378h1v2h-1zM616 375h1v3h-1zM616 375h2v2h-2zM617 372h1v3h-1zM618 369h1v3h-1zM619 365h1v4h-1zM620 363h1v2h-1zM621 360h1v3h-1zM622 357h1v3h-1zM623 356h1v1h-1zM624 353h1v3h-1zM625 347h1v6h-1zM626 345h1v2h-1zM626 345h2v2h-2zM627 342h1v3h-1zM627 342h2v2h-2zM628 339h1v3h-1zM629 338h1v1h-1zM629 338h2v2h-2zM630 335h1v3h-1zM631 331h1v4h-1zM631 331h2v2h-2zM632 328h1v3h-1zM633 326h1v2h-1zM634 323h1v3h-1zM635 320h1v3h-1zM636 317h1v3h-1zM637 315h1v2h-1zM638 312h1v3h-1zM638 312h2v2h-2zM639 310h1v2h-1zM639 310h2v2h-2zM640 307h1v3h-1zM641 304h1v3h-1zM642 301h1v3h-1zM643 299h1v2h-1zM643 299h2v2h-2zM644 296h1v3h-1zM645 291h1v5h-1zM646 288h1v3h-1zM647 289h1v1h-1zM647 289h2v2h-2zM648 286h1v3h-1zM649 280h1v6h-1zM650 277h1v3h-1zM651 275h1v2h-1zM651 275h2v2h-2zM652 273h1v2h-1zM652 273h2v2h-2zM653 272h1v1h-1zM654 269h1v3h-1zM655 266h1v3h-1zM655 266h2v2h-2zM656 263h1v3h-1zM657 260h1v3h-1zM658 257h1v3h-1zM659 255h1v2h-1zM659 255h2v2h-2zM660 252h1v3h-1zM661 250h1v2h-1zM661 250h2v2h-2zM662 247h1v3h-1zM663 246h1v1h-1zM663 246h2v2h-2zM664 244h1v2h-1zM665 239h1v5h-1zM666 237h1v2h-1zM667 234h1v3h-1zM667 234h2v2h-2zM668 232h1v2h-1zM668 232h2v2h-2zM669 233h1v1h-1zM669 233h2v2h-2zM670 231h1v2h-1zM671 227h1v4h-1zM672 224h1v3h-1zM673 222h1v2h-1zM674 220h1v2h-1zM675 219h1v1h-1zM676 217h1v2h-1zM677 212h1v5h-1zM678 210h1v2h-1zM679 211h1v1h-1zM680 209h1v2h-1zM680 209h2v2h-2zM681 205h1v4h-1zM682 203h1v2h-1zM683 202h1v1h-1zM684 200h1v2h-1zM685 199h1v1h-1zM685 199h2v2h-2zM686 197h1v2h-1zM687 196h1v1h-1zM688 195h1v1h-1zM688 195h2v2h-2zM689 191h1v4h-1zM690 190h1v1h-1zM691 187h1v3h-1zM692 185h1v2h-1zM693 185h1v1h-1zM693 185h2v2h-2zM694 184h1v1h-1zM695 184h1v1h-1zM696 183h1v1h-1zM697 180h1v3h-1zM698 179h1v1h-1zM698 179h2v2h-2zM699 177h1v2h-1zM700 176h1v1h-1zM701 176h1v1h-1zM702 175h1v1h-1zM703 173h1v2h-1zM704 172h1v1h-1zM705 169h1v3h-1zM706 169h1v1h-1zM707 170h1v1h-1zM708 169h1v1h-1zM708 169h2v2h-2zM709 169h1v1h-1zM710 168h1v1h-1zM711 167h1v1h-1zM712 167h1v1h-1zM713 168h1v1h-1zM714 167h1v1h-1zM715 166h1v1h-1zM716 165h1v1h-1zM716 165h2v2h-2zM717 164h1v1h-1zM717 164h2v2h-2zM718 164h1v1h-1zM718 164h2v2h-2zM719 162h1v2h-1zM720 162h1v1h-1zM721 161h1v1h-1zM722 161h1v1h-1zM723 161h1v1h-1zM724 161h1v1h-1zM725 162h1v2h-1zM726 163h1v1h-1zM727 160h1v3h-1zM728 160h1v1h-1zM729 160h1v1h-1zM730 160h1v1h-1zM731 161h1v1h-1zM732 161h1v1h-1zM732 161h2v2h-2zM733 162h1v2h-1zM734 164h1v1h-1zM734 164h2v2h-2zM735 164h1v1h-1zM736 165h1v1h-1zM736 165h2v2h-2zM737 166h1v1h-1zM738 167h1v1h-1zM739 166h1v1h-1zM740 166h1v1h-1zM741 167h1v2h-1zM742 169h1v1h-1zM743 170h1v1h-1zM744 170h1v1h-1zM745 171h1v1h-1zM746 172h1v1h-1zM747 172h1v1h-1zM748 173h1v1h-1zM749 174h1v5h-1zM750 179h1v1h-1zM751 178h1v1h-1zM751 178h2v2h-2zM752 179h1v1h-1zM752 179h2v2h-2zM753 180h1v1h-1zM754 181h1v1h-1zM755 182h1v2h-1zM756 184h1v1h-1zM757 184h1v1h-1zM758 185h1v1h-1zM759 186h1v4h-1zM760 190h1v1h-1zM761 189h1v1h-1zM762 190h1v2h-1zM763 192h1v5h-1zM764 197h1v1h-1zM765 198h1v1h-1zM765 198h2v2h-2zM766 199h1v2h-1zM767 201h1v2h-1zM768 203h1v2h-1zM769 204h1v1h-1zM770 205h1v2h-1zM770 206h2v2h-2zM771 207h1v4h-1zM772 211h1v2h-1zM773 213h1v2h-1zM773 214h2v2h-2zM774 215h1v2h-1zM775 217h1v2h-1zM776 219h1v2h-1zM777 221h1v4h-1zM778 225h1v2h-1zM779 227h1v3h-1zM780 230h1v2h-1zM781 231h1v1h-1zM782 232h1v2h-1zM783 234h1v3h-1zM784 237h1v2h-1zM785 239h1v2h-1zM786 241h1v3h-1zM787 244h1v2h-1zM787 245h2v2h-2zM788 246h1v3h-1zM789 249h1v3h-1zM790 252h1v2h-1zM791 254h1v2h-1zM792 256h1v3h-1zM792 258h2v2h-2zM793 259h1v1h-1zM794 260h1v2h-1zM795 262h1v4h-1zM796 266h1v2h-1zM797 268h1v2h-1zM797 269h2v2h-2zM798 270h1v3h-1zM799 273h1v3h-1zM800 276h1v3h-1zM801 279h1v2h-1zM802 281h1v3h-1zM803 284h1v5h-1zM804 289h1v3h-1zM805 292h1v2h-1zM806 294h1v2h-1zM806 295h2v2h-2zM807 296h1v2h-1zM808 298h1v3h-1zM809 301h1v4h-1zM810 305h1v3h-1zM811 308h1v4h-1zM812 312h1v3h-1zM813 314h1v1h-1zM814 315h1v2h-1zM815 317h1v6h-1zM816 323h1v3h-1zM817 326h1v2h-1zM818 328h1v2h-1zM819 330h1v3h-1zM819 332h2v2h-2zM820 333h1v2h-1zM821 335h1v7h-1zM821 341h2v2h-2zM822 342h1v2h-1zM823 344h1v2h-1zM824 346h1v3h-1zM824 348h2v2h-2zM825 349h1v1h-1zM826 350h1v3h-1zM827 353h1v3h-1zM828 356h1v3h-1zM829 359h1v3h-1zM830 362h1v3h-1zM831 365h1v4h-1zM832 369h1v2h-1zM832 370h2v2h-2zM833 371h1v3h-1zM834 374h1v3h-1zM835 377h1v4h-1zM836 381h1v3h-1zM836 383h2v2h-2zM837 384h1v1h-1zM838 385h1v3h-1zM839 388h1v3h-1zM840 391h1v3h-1zM841 394h1v4h-1zM841 397h2v2h-2zM842 398h1v3h-1zM842 400h2v2h-2zM843 401h1v1h-1zM844 402h1v3h-1zM845 403h1v1h-1zM846 404h1v3h-1zM847 407h1v3h-1zM848 410h1v3h-1zM849 413h1v3h-1zM850 416h1v3h-1zM851 419h1v3h-1zM852 422h1v3h-1zM852 424h2v2h-2zM853 425h1v2h-1zM854 427h1v3h-1zM855 430h1v1h-1zM855 430h2v2h-2zM856 431h1v2h-1zM857 433h1v4h-1zM858 437h1v3h-1zM858 439h2v2h-2zM859 440h1v2h-1zM860 442h1v2h-1zM861 443h1v1h-1zM862 444h1v2h-1zM863 446h1v3h-1zM863 448h2v2h-2zM864 449h1v2h-1zM865 451h1v5h-1zM866 456h1v2h-1zM866 457h2v2h-2zM867 458h1v3h-1zM868 461h1v2h-1zM868 462h2v2h-2zM869 463h1v2h-1zM870 465h1v2h-1zM871 466h1v1h-1zM872 467h1v2h-1zM873 469h1v2h-1zM874 471h1v2h-1zM875 473h1v5h-1zM875 477h2v2h-2zM876 478h1v2h-1zM877 477h1v2h-1zM877 477h2v2h-2zM878 478h1v2h-1zM878 479h2v2h-2zM879 480h1v3h-1zM880 483h1v1h-1zM881 484h1v3h-1zM882 487h1v1h-1zM883 487h1v1h-1zM884 488h1v2h-1zM885 490h1v3h-1zM886 493h1v1h-1zM887 494h1v1h-1zM888 495h1v1h-1zM889 495h1v1h-1zM890 496h1v1h-1zM891 497h1v5h-1zM892 502h1v1h-1zM893 502h1v1h-1zM894 503h1v1h-1zM895 503h1v1h-1zM895 503h2v2h-2zM896 504h1v1h-1zM897 505h1v1h-1zM897 505h2v2h-2zM898 506h1v1h-1zM899 507h1v2h-1zM900 509h1v1h-1zM901 510h1v1h-1zM902 510h1v1h-1zM903 510h1v1h-1zM904 510h1v1h-1zM905 511h1v2h-1zM905 512h2v2h-2zM906 512h1v1h-1zM906 512h2v2h-2zM907 512h1v1h-1zM908 512h1v1h-1zM909 513h1v2h-1zM910 514h1v1h-1zM910 514h2v2h-2zM911 514h1v1h-1zM912 515h1v1h-1zM913 515h1v1h-1zM914 515h1v1h-1zM914 515h2v2h-2zM915 515h1v1h-1zM916 515h1v1h-1zM917 515h1v1h-1zM918 515h1v1h-1zM918 515h2v2h-2zM919 515h1v1h-1zM920 515h1v1h-1zM921 516h1v1h-1zM921 516h2v2h-2zM922 516h1v1h-1zM923 515h1v1h-1zM924 514h1v1h-1zM925 514h1v1h-1zM926 514h1v1h-1zM926 514h2v2h-2zM927 512h1v2h-1zM928 512h1v1h-1zM929 510h1v2h-1zM929 510h2v2h-2zM930 510h1v1h-1zM931 511h1v2h-1zM932 511h1v1h-1zM933 510h1v1h-1zM934 509h1v1h-1zM935 508h1v1h-1zM936 507h1v1h-1zM936 507h2v2h-2zM937 508h1v2h-1zM938 508h1v1h-1zM939 503h1v5h-1zM940 502h1v1h-1zM941 502h1v1h-1zM942 501h1v1h-1zM943 500h1v1h-1zM944 499h1v1h-1zM945 497h1v2h-1zM945 497h2v2h-2zM946 496h1v1h-1zM947 495h1v1h-1zM948 494h1v1h-1zM948 494h2v2h-2zM949 491h1v3h-1zM950 489h1v2h-1zM951 489h1v1h-1zM952 488h1v1h-1zM953 486h1v2h-1zM954 485h1v1h-1zM955 481h1v4h-1zM956 480h1v1h-1zM957 480h1v1h-1zM958 478h1v2h-1zM958 478h2v2h-2zM959 474h1v4h-1zM960 472h1v2h-1zM961 472h1v1h-1zM961 472h2v2h-2zM962 470h1v2h-1zM963 469h1v1h-1zM964 467h1v2h-1zM965 465h1v2h-1zM965 465h2v2h-2zM966 463h1v2h-1zM967 458h1v5h-1zM968 456h1v2h-1zM969 457h1v2h-1zM970 456h1v2h-1zM971 453h1v3h-1zM971 453h2v2h-2zM972 450h1v3h-1zM972 450h2v2h-2zM973 448h1v2h-1zM974 446h1v2h-1zM975 442h1v4h-1zM975 442h2v2h-2zM976 440h1v2h-1zM977 437h1v3h-1zM977 437h2v2h-2zM978 435h1v2h-1zM979 434h1v1h-1zM980 432h1v2h-1zM981 429h1v3h-1zM982 427h1v2h-1zM983 423h1v4h-1zM984 421h1v2h-1zM985 417h1v4h-1zM986 414h1v3h-1zM987 413h1v1h-1zM987 413h2v2h-2zM988 410h1v3h-1zM989 406h1v4h-1zM990 404h1v2h-1zM990 404h2v2h-2zM991 402h1v2h-1zM992 400h1v2h-1zM993 398h1v2h-1zM994 395h1v3h-1zM995 392h1v3h-1zM995 392h2v2h-2zM996 389h1v3h-1zM997 387h1v2h-1zM998 384h1v3h-1zM999 381h1v3h-1zM1000 378h1v3h-1zM1001 374h1v4h-1zM1002 371h1v3h-1zM1002 371h2v2h-2zM1003 369h1v2h-1zM1004 366h1v3h-1zM1005 363h1v3h-1zM1006 360h1v3h-1zM1007 356h1v4h-1zM1008 353h1v3h-1zM1009 353h1v1h-1zM1010 350h1v3h-1zM1011 346h1v4h-1zM1012 343h1v3h-1zM1012 343h2v2h-2zM1013 340h1v3h-1zM1014 337h1v3h-1zM1015 335h1v2h-1zM1015 335h2v2h-2zM1016 332h1v3h-1zM1017 328h1v4h-1zM1017 328h2v2h-2zM1018 325h1v3h-1zM1019 322h1v3h-1zM1019 322h2v2h-2zM1020 320h1v2h-1z" fill="#00e6e8"/>
<path d="M1 340h11v1h1v1h-13v-1h1z" fill="#ffff00"/><path d="M0 342h13.5l7 7.5l-7 8.5h-13z" fill="#00e6e8"/><rect x="1" y="356" width="12" height="3" fill="#00a8b0"/><path d="M1010 374.5L1016 369v11z" fill="#ffff00"/><rect x="1016" y="374" width="5" height="1" fill="#ffff00"/><path d="M517 1h9l-4.5 4z" fill="#ff9900"/><rect x="517" y="5" width="8" height="11" rx="2" fill="#ff9900"/><rect x="518" y="6" width="6" height="2" fill="#000"/><rect x="520" y="8" width="3" height="7" fill="#000"/><rect x="521" y="1" width="2" height="14" fill="#fff"/><path d="M515.5 17h12l-6 6z" fill="#ff9900"/><path d="M266 24h10v1h1v11h-1v1h-2v1h-2v1h-2v-1h-2v-1h-2v-1h-1v-11h1z" fill="#ff9900"/><rect x="266" y="25" width="10" height="2" fill="#000"/><rect x="270" y="27" width="2" height="9" fill="#000"/>
</svg>
<div class="a" style="left:0;top:-3px;font:22px/1 'Liberation Serif',serif;letter-spacing:-1px;color:#f0f0ff;-webkit-text-stroke:0.4px #f0f0ff">Tek</div>
<div class="a" style="left:35px;top:0px;font-size:16px;letter-spacing:0.5px;color:#f0f0ff;">Run</div>
<div class="a" style="left:925px;top:0px;font-size:16px;letter-spacing:0.75px;color:#f0f0ff;">Trig?</div>
<div class="a" style="left:20px;top:670px;width:553px;height:19px;border:1px solid #c8c8c8;border-radius:7px"></div>
<div class="a" style="left:26px;top:673px;width:25px;height:16px;border-radius:7px/6px;background:#ffff00"></div>
<svg class="a" style="left:0;top:0" width="1024" height="768" shape-rendering="crispEdges"><path d="M38 675h2v11h-2zM36 676h2v1h-2z" fill="#000"/></svg>
<div class="a" style="left:3px;top:344px;font-size:16px;letter-spacing:0px;color:#000;font-weight:bold">2</div>
<div class="a" style="left:68px;top:673px;font-size:16px;letter-spacing:0.75px;color:#ffff00;">2.00 V</div>
<div class="a" style="left:165px;top:673px;width:25px;height:16px;border-radius:7px/6px;background:#00e6e8"></div>
<div class="a" style="left:173px;top:674px;font-size:16px;letter-spacing:0px;color:#000;font-weight:bold">2</div>
<div class="a" style="left:207px;top:673px;font-size:16px;letter-spacing:0.75px;color:#00e6e8;">2.00 V</div>
<svg class="a" style="left:0;top:0" width="1024" height="768" shape-rendering="crispEdges"><path d="M144 675h1v7h-1zM145 675h2v1h-2zM147 676h1v3h-1zM145 679h2v1h-2zM147 680h1v1h-1zM145 681h2v1h-2zM148 679h1v5h-1zM150 681h1v3h-1zM152 679h1v5h-1zM149 684h1v2h-1zM151 684h1v2h-1z" fill="#ffff00"/></svg>
<svg class="a" style="left:0;top:0" width="1024" height="768" shape-rendering="crispEdges"><path d="M283 675h1v7h-1zM284 675h2v1h-2zM286 676h1v3h-1zM284 679h2v1h-2zM286 680h1v1h-1zM284 681h2v1h-2zM287 679h1v5h-1zM289 681h1v3h-1zM291 679h1v5h-1zM288 684h1v2h-1zM290 684h1v2h-1z" fill="#00e6e8"/></svg>
<div class="a" style="left:582px;top:670px;width:146px;height:36px;border:1px solid #c8c8c8;border-radius:7px"></div>
<div class="a" style="left:588px;top:673px;font-size:16px;letter-spacing:1.0px;color:#f4f4f4;">40.0ns</div>
<div class="a" style="left:587px;top:691px;width:12px;height:13px;background:#ff9900;border-radius:2px"></div>
<div class="a" style="left:587px;top:691px;font-size:13px;letter-spacing:0px;color:#000;width:12px;text-align:center;font-weight:bold">T</div>
<svg class="a" style="left:599px;top:692px" width="12" height="11" shape-rendering="crispEdges"><path d="M0 4h7v-3l4 4.5l-4 4.5v-3h-7z" fill="#ff9900"/></svg>
<svg class="a" style="left:611px;top:693px" width="11" height="7" shape-rendering="crispEdges"><path d="M0 0h11L5.5 7z" fill="#ff9900"/></svg>
<div class="a" style="left:622px;top:690px;font-size:16px;letter-spacing:1.0px;color:#ff9900;">100.0000ns</div>
<div class="a" style="left:737px;top:670px;width:105px;height:36px;border:1px solid #c8c8c8;border-radius:7px"></div>
<div class="a" style="left:743px;top:673px;font-size:16px;letter-spacing:0.75px;color:#f4f4f4;">2.50GS/s</div>
<div class="a" style="left:743px;top:690px;font-size:16px;letter-spacing:1.5px;color:#f4f4f4;">1M points</div>
<div class="a" style="left:851px;top:670px;width:169px;height:37px;border:1px solid #c8c8c8;border-radius:7px"></div>
<div class="a" style="left:882px;top:673px;width:25px;height:16px;border-radius:7px/6px;background:#ffff00"></div>
<svg class="a" style="left:0;top:0" width="1024" height="768" shape-rendering="crispEdges"><path d="M894 675h2v11h-2zM892 676h2v1h-2z" fill="#000"/></svg>
<svg class="a" style="left:919px;top:674px" width="14" height="13" shape-rendering="crispEdges"><path d="M1 10.5h5l3.5-8.5h4.5" fill="none" stroke="#f0f0f0" stroke-width="1.6"/></svg>
<div class="a" style="left:950px;top:680px;width:10px;height:1px;background:#f4f4f4"></div>
<div class="a" style="left:962px;top:673px;font-size:16px;letter-spacing:0.8px;color:#f4f4f4;">800mV</div>
<div class="a" style="left:0;top:714px;width:17px;height:54px;background:#00e6e8;border-radius:0 6px 6px 0"></div>
<div class="a" style="left:4px;top:735px;font-size:15px;letter-spacing:0px;color:#000;font-weight:bold">2</div>
<div class="a" style="left:20px;top:714px;width:112px;height:56px;background:#545552;border:1px solid #6c6c6c;border-top-color:#888;border-bottom-color:#7a7a7a;border-radius:4px"></div>
<div class="a" style="left:138px;top:714px;width:112px;height:56px;background:#545552;border:1px solid #6c6c6c;border-top-color:#888;border-bottom-color:#7a7a7a;border-radius:4px"></div>
<div class="a" style="left:256px;top:714px;width:112px;height:56px;background:#545552;border:1px solid #6c6c6c;border-top-color:#888;border-bottom-color:#7a7a7a;border-radius:4px"></div>
<div class="a" style="left:374px;top:714px;width:112px;height:51px;background:#545552;border:1px solid #6c6c6c;border-top-color:#888;border-bottom-color:#7a7a7a;border-radius:4px"></div>
<div class="a" style="left:492px;top:714px;width:112px;height:51px;background:#545552;border:1px solid #6c6c6c;border-top-color:#888;border-bottom-color:#7a7a7a;border-radius:4px"></div>
<div class="a" style="left:728px;top:714px;width:112px;height:51px;background:#545552;border:1px solid #6c6c6c;border-top-color:#888;border-bottom-color:#7a7a7a;border-radius:4px"></div>
<div class="a" style="left:41px;top:720px;font-size:16px;letter-spacing:1.5px;color:#f4f4f4;">Coupling</div>
<div class="a" style="left:33px;top:742px;width:28px;height:25px;background:#0a6cff;border:1px solid #8ab4ff;border-radius:4px"></div>
<div class="a" style="left:37px;top:747px;font-size:16px;letter-spacing:-0.25px;color:#fff;">DC</div>
<div class="a" style="left:95px;top:747px;font-size:16px;letter-spacing:-0.5px;color:#f4f4f4;">AC</div>
<div class="a" style="left:146px;top:720px;font-size:16px;letter-spacing:1.5px;color:#f4f4f4;">Termination</div>
<div class="a" style="left:143px;top:742px;width:45px;height:24px;background:#0a6cff;border:1px solid #8ab4ff;border-radius:4px"></div>
<div class="a" style="left:149px;top:747px;font-size:16px;letter-spacing:1.0px;color:#fff;">1M&#937;</div>
<div class="a" style="left:207px;top:747px;font-size:16px;letter-spacing:1.75px;color:#f4f4f4;">50&#937;</div>
<div class="a" style="left:289px;top:720px;font-size:16px;letter-spacing:1.75px;color:#f4f4f4;">Invert</div>
<div class="a" style="left:273px;top:747px;font-size:16px;letter-spacing:1.5px;color:#f4f4f4;transform:scaleX(1.06);transform-origin:0 0">On</div>
<div class="a" style="left:325px;top:742px;width:31px;height:24px;background:#0a6cff;border:1px solid #8ab4ff;border-radius:4px"></div>
<div class="a" style="left:329px;top:747px;font-size:16px;letter-spacing:2.0px;color:#fff;">Off</div>
<div class="a" style="left:389px;top:725px;font-size:16px;letter-spacing:1.25px;color:#f4f4f4;">Bandwidth</div>
<div class="a" style="left:401px;top:742px;width:60px;height:16px;background:#0a6cff"></div>
<div class="a" style="left:404px;top:742px;font-size:16px;letter-spacing:1.25px;color:#fff;">20MHz</div>
<div class="a" style="left:514px;top:733px;width:25px;height:16px;border-radius:7px/6px;background:#00e6e8"></div>
<div class="a" style="left:522px;top:734px;font-size:16px;letter-spacing:0px;color:#000;font-weight:bold">2</div>
<div class="a" style="left:546px;top:733px;font-size:16px;letter-spacing:0.25px;color:#f4f4f4;">Label</div>
<svg class="a" style="left:773px;top:726px" width="24" height="12" shape-rendering="crispEdges"><path d="M12 0L24 12H0z" fill="#e8e8e8"/><rect x="6" y="10" width="12" height="2" fill="#9a9a9a"/></svg>
<div class="a" style="left:765px;top:740px;font-size:16px;letter-spacing:1.25px;color:#f4f4f4;">More</div>
<div class="a" style="left:909px;top:729px;width:111px;height:35px;border:1px solid #c8c8c8;border-radius:7px"></div>
<div class="a" style="left:916px;top:733px;font-size:16px;letter-spacing:0.75px;color:#f4f4f4;">11 Sep&nbsp;&nbsp;2023</div>
<div class="a" style="left:916px;top:749px;font-size:16px;letter-spacing:1.0px;color:#f4f4f4;">18:18:26</div>

</body></html>
